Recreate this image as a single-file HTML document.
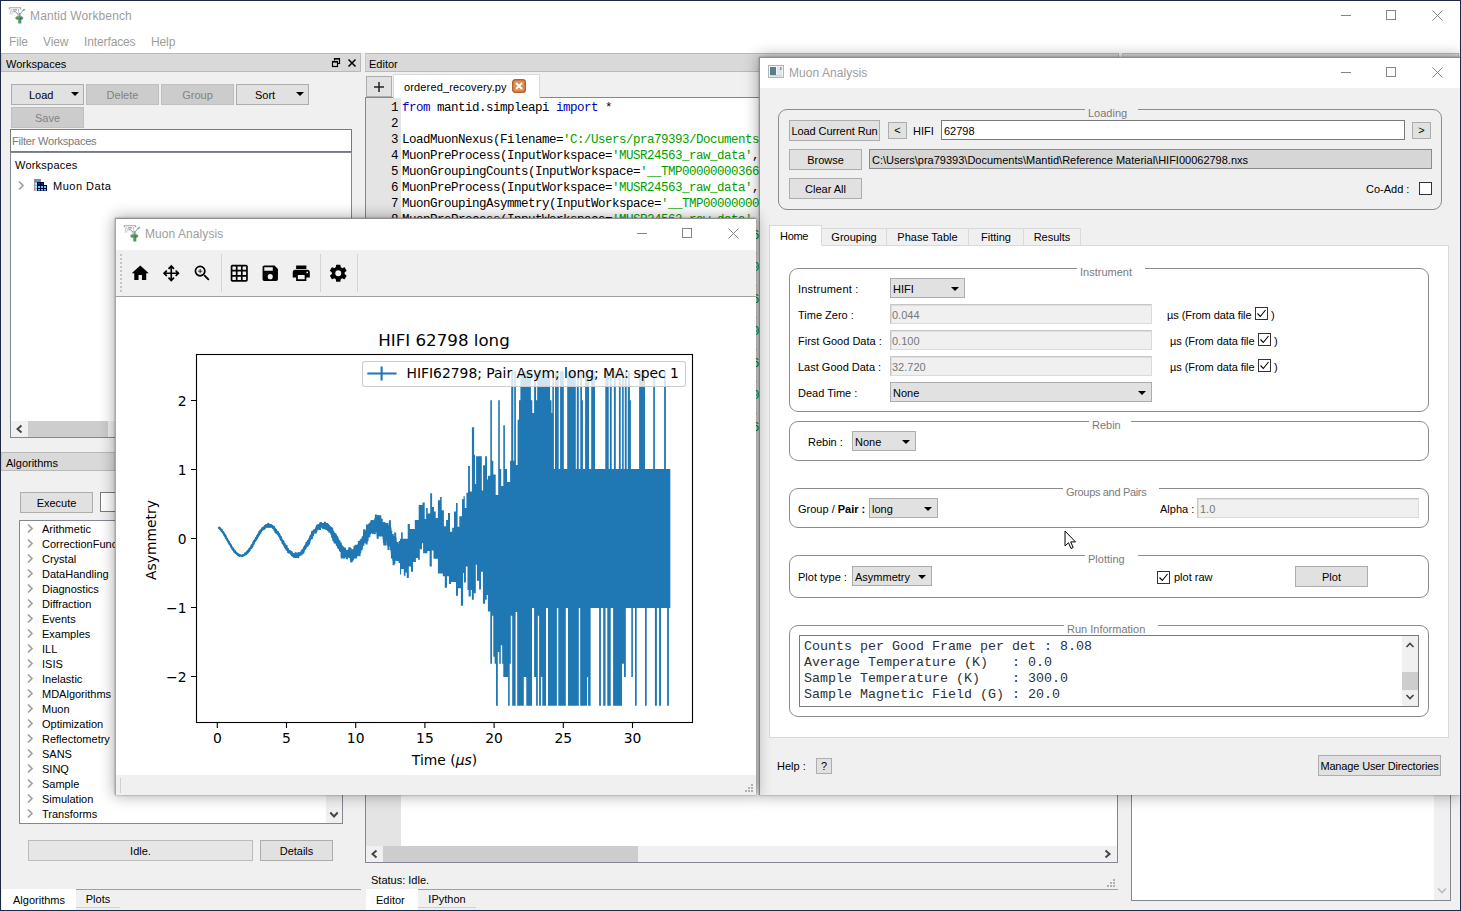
<!DOCTYPE html>
<html lang="en">
<head>
<meta charset="utf-8">
<title>Mantid Workbench</title>
<style>
*{box-sizing:border-box;margin:0;padding:0}
html,body{width:1461px;height:911px;overflow:hidden;background:#f0f0f0}
body{font-family:"Liberation Sans",sans-serif;font-size:11px;color:#000;position:relative}
.a{position:absolute;white-space:nowrap}
.t{position:absolute;white-space:nowrap;line-height:14px;height:14px}
.seg{font-size:12px;color:#9d9d9d;line-height:16px;height:16px}
.btn{position:absolute;background:#e1e1e1;border:1px solid #adadad;text-align:center;white-space:nowrap;line-height:20px}
.btn.dis{background:#cccccc;border-color:#bfbfbf;color:#838383}
.dock{position:absolute;height:19px;background:#d9d9d9;border:1px solid #b9b9b9;border-left-color:#c8c8c8;line-height:20px;padding-left:3px;white-space:nowrap}
.white{background:#fff}
.mono{font-family:"Liberation Mono",monospace}
.dj{font-family:"DejaVu Sans","Liberation Sans",sans-serif}
.win{position:absolute;background:#f0f0f0;box-shadow:0 0 14px 1px rgba(0,0,0,.32),0 0 2px rgba(0,0,0,.35)}
.gb{position:absolute;border:1px solid #8c8c8c;border-radius:9px}
.gbl{position:absolute;background:#f0f0f0;color:#7b7b7b;text-align:center;line-height:14px;height:14px;white-space:nowrap}
.gbl.w{background:#fff}
.inp{position:absolute;border:1px solid #7a7a7a;background:#fff;line-height:18px;padding-left:3px;white-space:nowrap}
.inp.dis{background:#f0f0f0;border:1px solid #c6c6c6;border-right-color:#dadada;border-bottom-color:#dadada;box-shadow:inset 1px 1px 0 #dedede;color:#787878}
.cmb{position:absolute;background:#e1e1e1;border:1px solid #adadad;line-height:18px;padding-left:3px;white-space:nowrap}
.cmb:after{content:"";position:absolute;right:5px;top:8px;border:4px solid transparent;border-top:4px solid #000;border-bottom:0}
.chk{position:absolute;width:13px;height:13px;border:1px solid #333;background:#fff}
.tab{position:absolute;border:1px solid #d9d9d9;background:#f0f0f0;text-align:center;line-height:19px;white-space:nowrap}
.tab.sel{background:#fff;border-bottom-color:#fff}
</style>
</head>
<body>
<!-- ============ MAIN WINDOW CHROME ============ -->
<div class="a white" style="left:0;top:0;width:1461px;height:53px"></div>
<div class="t seg" style="left:30px;top:8px;letter-spacing:.13px">Mantid Workbench</div>
<div class="t seg" style="left:9px;top:34px;letter-spacing:-.12px">File</div>
<div class="t seg" style="left:43px;top:34px;letter-spacing:-.12px">View</div>
<div class="t seg" style="left:84px;top:34px;letter-spacing:-.12px">Interfaces</div>
<div class="t seg" style="left:151px;top:34px;letter-spacing:-.12px">Help</div>
<svg class="a" style="left:7px;top:5px" width="20" height="20" viewBox="0 0 20 20"><g fill="none" stroke-linecap="round"><path d="M2.300 2.700h11.400M2.300 2.700v1.300M13.600 2.700v1.300" stroke="#a4a4a4" stroke-width="1.100"/><path d="M6.300 4.900h3.300" stroke="#9a9a9a" stroke-width="1.100"/><path d="M4.200 4.600v.800M11.400 4.600v.800" stroke="#aaa" stroke-width="1"/><path d="M3.500 6.200l-.3 3.100M5.300 6.200l-.5 3.100" stroke="#c9c9c9" stroke-width="1"/><path d="M6.800 6.700h1.800l2.200 2.400.5 1.600" stroke="#8d8d8d" stroke-width="1"/><path d="M11.700 6.200v4.800" stroke="#c4c4c4" stroke-width="1"/><path d="M12.900 8.500v3" stroke="#4d7c6f" stroke-width="1.200"/><path d="M13.600 8.600l1.500-2.300 1.200-.9" stroke="#8aa0ad" stroke-width="1"/><path d="M16.300 5.300l1-.5" stroke="#55995c" stroke-width="1.300"/></g><rect x="8.300" y="11.500" width="8" height="3" rx="1.500" fill="#7d8a80"/><rect x="9.600" y="11.500" width="5.400" height="3" fill="#4f9a57"/><rect x="11.300" y="13" width="3" height="5.500" fill="#4f9a57"/><rect x="13" y="13.100" width="1.200" height="1.200" fill="#1e5c6a"/></svg>
<svg class="a" style="left:1336px;top:5px" width="112" height="20" viewBox="0 0 112 20"><g fill="none" stroke="#858585" stroke-width="1"><path d="M5 10.5h10"/><rect x="50.500" y="5.500" width="9" height="9"/><path d="M96.500 5.500l10 10M106.500 5.500l-10 10"/></g></svg>

<!-- ============ WORKSPACES DOCK ============ -->
<!--LEFT-->
<div class="dock" style="left:1px;top:53px;width:360px;padding-left:4px">Workspaces</div>
<svg class="a" style="left:331px;top:57px" width="27" height="11" viewBox="0 0 27 11"><g fill="none" stroke="#000"><path d="M3.500 3.500v-2h5v5h-2" stroke-width="1.200"/><path d="M3 1.800h6" stroke-width="1.600"/><rect x="1.500" y="4.500" width="5" height="5" stroke-width="1.200"/><path d="M1 4.800h6" stroke-width="1.600"/><path d="M17.500 2.500l7 7M24.500 2.500l-7 7" stroke-width="1.500"/></g></svg>
<div class="btn" style="left:11px;top:84px;width:73px;height:21px;text-align:left;padding-left:17px">Load</div>
<div class="a" style="left:71px;top:92px;border:4px solid transparent;border-top:4px solid #000;border-bottom:0"></div>
<div class="btn dis" style="left:86px;top:84px;width:73px;height:21px">Delete</div>
<div class="btn dis" style="left:161px;top:84px;width:73px;height:21px">Group</div>
<div class="btn" style="left:236px;top:84px;width:73px;height:21px;text-align:left;padding-left:18px">Sort</div>
<div class="a" style="left:296px;top:92px;border:4px solid transparent;border-top:4px solid #000;border-bottom:0"></div>
<div class="btn dis" style="left:11px;top:107px;width:73px;height:21px">Save</div>
<div class="inp" style="left:10px;top:129px;width:342px;height:23px;line-height:23px;padding-left:1px;letter-spacing:-.2px;color:#7a7a7a">Filter Workspaces</div>
<div class="a white" style="left:10px;top:152px;width:342px;height:286px;border:1px solid #828790"></div>
<div class="t" style="left:15px;top:158px;letter-spacing:.22px">Workspaces</div>
<svg class="a" style="left:17px;top:180px" width="8" height="11" viewBox="0 0 8 11"><path d="M2 1.500l4 4-4 4" fill="none" stroke="#a0a0a0" stroke-width="1.700"/></svg>
<svg class="a" style="left:34px;top:179px" width="14" height="13" viewBox="0 0 14 13"><rect x="0" y="0" width="7" height="3" fill="#8c8c8c"/><rect x="1" y="1" width="2" height="1.300" fill="#4a90d9"/><rect x="4" y="1" width="2" height="1.300" fill="#4a90d9"/><rect x="0" y="3" width="3" height="9" fill="#9a9a9a"/><g fill="#a8ecff"><rect x="1" y="4" width="2" height="2"/><rect x="1" y="7" width="2" height="2"/><rect x="1" y="10" width="2" height="1.500"/></g><rect x="3" y="3" width="7" height="3" fill="#00003a"/><rect x="4" y="4" width="2" height="1.500" fill="#1c2ea8"/><rect x="7" y="4" width="2" height="1.500" fill="#1c2ea8"/><rect x="3" y="6" width="10" height="6" fill="#00003a"/><g fill="#4fd8ff"><rect x="4" y="7" width="2" height="2"/><rect x="7" y="7" width="2" height="2"/><rect x="10" y="7" width="2" height="2"/><rect x="4" y="10" width="2" height="1.500"/><rect x="7" y="10" width="2" height="1.500"/><rect x="10" y="10" width="2" height="1.500"/></g></svg>
<div class="t" style="left:53px;top:179px;letter-spacing:.5px">Muon Data</div>
<div class="a" style="left:11px;top:421px;width:340px;height:16px;background:#f0f0f0"></div>
<div class="a" style="left:28px;top:421px;width:80px;height:16px;background:#cdcdcd"></div>
<svg class="a" style="left:15px;top:424px" width="8" height="10" viewBox="0 0 8 10"><path d="M6.500 1.500l-4 3.500 4 3.500" fill="none" stroke="#444" stroke-width="1.900"/></svg>

<!-- Algorithms dock -->
<div class="dock" style="left:1px;top:452px;width:360px;padding-left:4px">Algorithms</div>
<div class="btn" style="left:20px;top:492px;width:73px;height:21px">Execute</div>
<div class="inp" style="left:100px;top:492px;width:243px;height:20px"></div>
<div class="a white" style="left:19px;top:520px;width:324px;height:304px;border:1px solid #828790"></div>
<div class="a" style="left:326px;top:521px;width:16px;height:302px;background:#f0f0f0"></div>
<svg class="a" style="left:329px;top:811px" width="10" height="8" viewBox="0 0 10 8"><path d="M1.300 1.500l3.700 4 3.700-4" fill="none" stroke="#444" stroke-width="2"/></svg>
<svg class="a" style="left:26px;top:523px" width="8" height="11" viewBox="0 0 8 11"><path d="M2 1.500l4 4-4 4" fill="none" stroke="#a0a0a0" stroke-width="1.700"/></svg><div class="t" style="left:42px;top:522px">Arithmetic</div>
<svg class="a" style="left:26px;top:538px" width="8" height="11" viewBox="0 0 8 11"><path d="M2 1.500l4 4-4 4" fill="none" stroke="#a0a0a0" stroke-width="1.700"/></svg><div class="t" style="left:42px;top:537px">CorrectionFunctions</div>
<svg class="a" style="left:26px;top:553px" width="8" height="11" viewBox="0 0 8 11"><path d="M2 1.500l4 4-4 4" fill="none" stroke="#a0a0a0" stroke-width="1.700"/></svg><div class="t" style="left:42px;top:552px">Crystal</div>
<svg class="a" style="left:26px;top:568px" width="8" height="11" viewBox="0 0 8 11"><path d="M2 1.500l4 4-4 4" fill="none" stroke="#a0a0a0" stroke-width="1.700"/></svg><div class="t" style="left:42px;top:567px">DataHandling</div>
<svg class="a" style="left:26px;top:583px" width="8" height="11" viewBox="0 0 8 11"><path d="M2 1.500l4 4-4 4" fill="none" stroke="#a0a0a0" stroke-width="1.700"/></svg><div class="t" style="left:42px;top:582px">Diagnostics</div>
<svg class="a" style="left:26px;top:598px" width="8" height="11" viewBox="0 0 8 11"><path d="M2 1.500l4 4-4 4" fill="none" stroke="#a0a0a0" stroke-width="1.700"/></svg><div class="t" style="left:42px;top:597px">Diffraction</div>
<svg class="a" style="left:26px;top:613px" width="8" height="11" viewBox="0 0 8 11"><path d="M2 1.500l4 4-4 4" fill="none" stroke="#a0a0a0" stroke-width="1.700"/></svg><div class="t" style="left:42px;top:612px">Events</div>
<svg class="a" style="left:26px;top:628px" width="8" height="11" viewBox="0 0 8 11"><path d="M2 1.500l4 4-4 4" fill="none" stroke="#a0a0a0" stroke-width="1.700"/></svg><div class="t" style="left:42px;top:627px">Examples</div>
<svg class="a" style="left:26px;top:643px" width="8" height="11" viewBox="0 0 8 11"><path d="M2 1.500l4 4-4 4" fill="none" stroke="#a0a0a0" stroke-width="1.700"/></svg><div class="t" style="left:42px;top:642px">ILL</div>
<svg class="a" style="left:26px;top:658px" width="8" height="11" viewBox="0 0 8 11"><path d="M2 1.500l4 4-4 4" fill="none" stroke="#a0a0a0" stroke-width="1.700"/></svg><div class="t" style="left:42px;top:657px">ISIS</div>
<svg class="a" style="left:26px;top:673px" width="8" height="11" viewBox="0 0 8 11"><path d="M2 1.500l4 4-4 4" fill="none" stroke="#a0a0a0" stroke-width="1.700"/></svg><div class="t" style="left:42px;top:672px">Inelastic</div>
<svg class="a" style="left:26px;top:688px" width="8" height="11" viewBox="0 0 8 11"><path d="M2 1.500l4 4-4 4" fill="none" stroke="#a0a0a0" stroke-width="1.700"/></svg><div class="t" style="left:42px;top:687px">MDAlgorithms</div>
<svg class="a" style="left:26px;top:703px" width="8" height="11" viewBox="0 0 8 11"><path d="M2 1.500l4 4-4 4" fill="none" stroke="#a0a0a0" stroke-width="1.700"/></svg><div class="t" style="left:42px;top:702px">Muon</div>
<svg class="a" style="left:26px;top:718px" width="8" height="11" viewBox="0 0 8 11"><path d="M2 1.500l4 4-4 4" fill="none" stroke="#a0a0a0" stroke-width="1.700"/></svg><div class="t" style="left:42px;top:717px">Optimization</div>
<svg class="a" style="left:26px;top:733px" width="8" height="11" viewBox="0 0 8 11"><path d="M2 1.500l4 4-4 4" fill="none" stroke="#a0a0a0" stroke-width="1.700"/></svg><div class="t" style="left:42px;top:732px">Reflectometry</div>
<svg class="a" style="left:26px;top:748px" width="8" height="11" viewBox="0 0 8 11"><path d="M2 1.500l4 4-4 4" fill="none" stroke="#a0a0a0" stroke-width="1.700"/></svg><div class="t" style="left:42px;top:747px">SANS</div>
<svg class="a" style="left:26px;top:763px" width="8" height="11" viewBox="0 0 8 11"><path d="M2 1.500l4 4-4 4" fill="none" stroke="#a0a0a0" stroke-width="1.700"/></svg><div class="t" style="left:42px;top:762px">SINQ</div>
<svg class="a" style="left:26px;top:778px" width="8" height="11" viewBox="0 0 8 11"><path d="M2 1.500l4 4-4 4" fill="none" stroke="#a0a0a0" stroke-width="1.700"/></svg><div class="t" style="left:42px;top:777px">Sample</div>
<svg class="a" style="left:26px;top:793px" width="8" height="11" viewBox="0 0 8 11"><path d="M2 1.500l4 4-4 4" fill="none" stroke="#a0a0a0" stroke-width="1.700"/></svg><div class="t" style="left:42px;top:792px">Simulation</div>
<svg class="a" style="left:26px;top:808px" width="8" height="11" viewBox="0 0 8 11"><path d="M2 1.500l4 4-4 4" fill="none" stroke="#a0a0a0" stroke-width="1.700"/></svg><div class="t" style="left:42px;top:807px">Transforms</div>
<div class="a" style="left:28px;top:840px;width:225px;height:21px;background:#e6e6e6;border:1px solid #bcbcbc;text-align:center;line-height:20px">Idle.</div>
<div class="btn" style="left:260px;top:840px;width:73px;height:21px;line-height:20px">Details</div>
<div class="a" style="left:2px;top:889px;width:359px;height:1px;background:#a0a0a0"></div>
<div class="a white" style="left:2px;top:889px;width:74px;height:21px;text-align:center;line-height:22px">Algorithms</div>
<div class="a" style="left:76px;top:890px;width:44px;height:18px;border-bottom:1px solid #d0d0d0;text-align:center;line-height:19px">Plots</div>
<!--/LEFT-->

<!-- ============ EDITOR DOCK ============ -->
<!--EDITOR-->
<div class="dock" style="left:365px;top:53px;width:754px">Editor</div>
<div class="btn" style="left:366px;top:76px;width:26px;height:21px"></div>
<svg class="a" style="left:373px;top:81px" width="12" height="12" viewBox="0 0 12 12"><path d="M6 1v10M1 6h10" stroke="#222" stroke-width="1.500" fill="none"/></svg>
<div class="a white" style="left:365px;top:97px;width:753px;height:766px;border:1px solid #828790"></div>
<div class="a white" style="left:393px;top:74px;width:147px;height:24px;border:1px solid #d9d9d9;border-bottom:0"></div>
<div class="t" style="left:404px;top:80px;letter-spacing:.14px">ordered_recovery.py</div>
<svg class="a" style="left:512px;top:79px" width="14" height="14" viewBox="0 0 14 14"><rect x="0.700" y="0.700" width="12.600" height="12.600" rx="2.500" fill="#dc8f55" stroke="#b7622b" stroke-width="1.400"/><path d="M4 4l6 6M10 4l-6 6" stroke="#fff" stroke-width="2" fill="none"/></svg>
<div class="a" style="left:366px;top:98px;width:35px;height:748px;background:#e4e4e4"></div>
<div class="t mono" style="left:366px;top:100px;width:32px;text-align:right;font-size:12.5px;letter-spacing:-.5px;line-height:16px;height:16px">1</div>
<div class="t mono" style="left:402px;top:100px;width:714px;overflow:hidden;font-size:12.5px;letter-spacing:-.5px;line-height:16px;height:16px"><span style="color:#0000b4">from</span> mantid.simpleapi <span style="color:#0000b4">import</span> *</div>
<div class="t mono" style="left:366px;top:116px;width:32px;text-align:right;font-size:12.5px;letter-spacing:-.5px;line-height:16px;height:16px">2</div>
<div class="t mono" style="left:366px;top:132px;width:32px;text-align:right;font-size:12.5px;letter-spacing:-.5px;line-height:16px;height:16px">3</div>
<div class="t mono" style="left:402px;top:132px;width:714px;overflow:hidden;font-size:12.5px;letter-spacing:-.5px;line-height:16px;height:16px">LoadMuonNexus(Filename=<span style="color:#00a000">'C:/Users/pra79393/Documents/Mantid/Reference Material/MUSR00024563.nxs'</span>, OutputWorkspace=<span style="color:#00a000">'MUSR24563_raw_data'</span>)</div>
<div class="t mono" style="left:366px;top:148px;width:32px;text-align:right;font-size:12.5px;letter-spacing:-.5px;line-height:16px;height:16px">4</div>
<div class="t mono" style="left:402px;top:148px;width:714px;overflow:hidden;font-size:12.5px;letter-spacing:-.5px;line-height:16px;height:16px">MuonPreProcess(InputWorkspace=<span style="color:#00a000">'MUSR24563_raw_data'</span>, OutputWorkspace=<span style="color:#00a000">'__TMP0000000036600'</span>, TimeMin=0.1, TimeMax=32.0)</div>
<div class="t mono" style="left:366px;top:164px;width:32px;text-align:right;font-size:12.5px;letter-spacing:-.5px;line-height:16px;height:16px">5</div>
<div class="t mono" style="left:402px;top:164px;width:714px;overflow:hidden;font-size:12.5px;letter-spacing:-.5px;line-height:16px;height:16px">MuonGroupingCounts(InputWorkspace=<span style="color:#00a000">'__TMP0000000036600'</span>, OutputWorkspace=<span style="color:#00a000">'MUSR24563; Group; fwd; Counts'</span>, GroupName=<span style="color:#00a000">'fwd'</span>)</div>
<div class="t mono" style="left:366px;top:180px;width:32px;text-align:right;font-size:12.5px;letter-spacing:-.5px;line-height:16px;height:16px">6</div>
<div class="t mono" style="left:402px;top:180px;width:714px;overflow:hidden;font-size:12.5px;letter-spacing:-.5px;line-height:16px;height:16px">MuonPreProcess(InputWorkspace=<span style="color:#00a000">'MUSR24563_raw_data'</span>, OutputWorkspace=<span style="color:#00a000">'__TMP0000000036601'</span>, TimeMin=0.1, TimeMax=32.0)</div>
<div class="t mono" style="left:366px;top:196px;width:32px;text-align:right;font-size:12.5px;letter-spacing:-.5px;line-height:16px;height:16px">7</div>
<div class="t mono" style="left:402px;top:196px;width:714px;overflow:hidden;font-size:12.5px;letter-spacing:-.5px;line-height:16px;height:16px">MuonGroupingAsymmetry(InputWorkspace=<span style="color:#00a000">'__TMP0000000036601'</span>, OutputWorkspace=<span style="color:#00a000">'MUSR24563; Group; fwd; Asym'</span>, GroupName=<span style="color:#00a000">'fwd'</span>)</div>
<div class="t mono" style="left:366px;top:212px;width:32px;text-align:right;font-size:12.5px;letter-spacing:-.5px;line-height:16px;height:16px">8</div>
<div class="t mono" style="left:402px;top:212px;width:714px;overflow:hidden;font-size:12.5px;letter-spacing:-.5px;line-height:16px;height:16px">MuonPreProcess(InputWorkspace=<span style="color:#00a000">'MUSR24563_raw_data'</span>, OutputWorkspace=<span style="color:#00a000">'__TMP0000000036600'</span>, TimeMin=0.1, TimeMax=32.0)</div>
<div class="t mono" style="left:366px;top:228px;width:32px;text-align:right;font-size:12.5px;letter-spacing:-.5px;line-height:16px;height:16px">9</div>
<div class="t mono" style="left:402px;top:228px;width:714px;overflow:hidden;font-size:12.5px;letter-spacing:-.5px;line-height:16px;height:16px">MuonGroupingCounts(InputWorkspace=<span style="color:#00a000">'__TMP0000000036600'</span>, OutputWorkspace=<span style="color:#00a000">'MUSR24563; Group; fwd; Counts'</span>, GroupName=<span style="color:#00a000">'fwd'</span>)</div>
<div class="t mono" style="left:366px;top:244px;width:32px;text-align:right;font-size:12.5px;letter-spacing:-.5px;line-height:16px;height:16px">10</div>
<div class="t mono" style="left:402px;top:244px;width:714px;overflow:hidden;font-size:12.5px;letter-spacing:-.5px;line-height:16px;height:16px">MuonPreProcess(InputWorkspace=<span style="color:#00a000">'MUSR24563_raw_data'</span>, OutputWorkspace=<span style="color:#00a000">'__TMP0000000036600'</span>, TimeMin=0.1, TimeMax=32.0)</div>
<div class="t mono" style="left:366px;top:260px;width:32px;text-align:right;font-size:12.5px;letter-spacing:-.5px;line-height:16px;height:16px">11</div>
<div class="t mono" style="left:402px;top:260px;width:714px;overflow:hidden;font-size:12.5px;letter-spacing:-.5px;line-height:16px;height:16px">MuonGroupingAsymmetry(InputWorkspace=<span style="color:#00a000">'__TMP0000000036601'</span>, OutputWorkspace=<span style="color:#00a000">'MUSR24563; Group; fwd; Asym'</span>, GroupName=<span style="color:#00a000">'fwd'</span>)</div>
<div class="t mono" style="left:366px;top:276px;width:32px;text-align:right;font-size:12.5px;letter-spacing:-.5px;line-height:16px;height:16px">12</div>
<div class="t mono" style="left:402px;top:276px;width:714px;overflow:hidden;font-size:12.5px;letter-spacing:-.5px;line-height:16px;height:16px">MuonPreProcess(InputWorkspace=<span style="color:#00a000">'MUSR24563_raw_data'</span>, OutputWorkspace=<span style="color:#00a000">'__TMP0000000036600'</span>, TimeMin=0.1, TimeMax=32.0)</div>
<div class="t mono" style="left:366px;top:292px;width:32px;text-align:right;font-size:12.5px;letter-spacing:-.5px;line-height:16px;height:16px">13</div>
<div class="t mono" style="left:402px;top:292px;width:714px;overflow:hidden;font-size:12.5px;letter-spacing:-.5px;line-height:16px;height:16px">MuonGroupingCounts(InputWorkspace=<span style="color:#00a000">'__TMP0000000036600'</span>, OutputWorkspace=<span style="color:#00a000">'MUSR24563; Group; fwd; Counts'</span>, GroupName=<span style="color:#00a000">'fwd'</span>)</div>
<div class="t mono" style="left:366px;top:308px;width:32px;text-align:right;font-size:12.5px;letter-spacing:-.5px;line-height:16px;height:16px">14</div>
<div class="t mono" style="left:402px;top:308px;width:714px;overflow:hidden;font-size:12.5px;letter-spacing:-.5px;line-height:16px;height:16px">MuonPreProcess(InputWorkspace=<span style="color:#00a000">'MUSR24563_raw_data'</span>, OutputWorkspace=<span style="color:#00a000">'__TMP0000000036600'</span>, TimeMin=0.1, TimeMax=32.0)</div>
<div class="t mono" style="left:366px;top:324px;width:32px;text-align:right;font-size:12.5px;letter-spacing:-.5px;line-height:16px;height:16px">15</div>
<div class="t mono" style="left:402px;top:324px;width:714px;overflow:hidden;font-size:12.5px;letter-spacing:-.5px;line-height:16px;height:16px">MuonGroupingAsymmetry(InputWorkspace=<span style="color:#00a000">'__TMP0000000036601'</span>, OutputWorkspace=<span style="color:#00a000">'MUSR24563; Group; fwd; Asym'</span>, GroupName=<span style="color:#00a000">'fwd'</span>)</div>
<div class="t mono" style="left:366px;top:340px;width:32px;text-align:right;font-size:12.5px;letter-spacing:-.5px;line-height:16px;height:16px">16</div>
<div class="t mono" style="left:402px;top:340px;width:714px;overflow:hidden;font-size:12.5px;letter-spacing:-.5px;line-height:16px;height:16px">MuonPreProcess(InputWorkspace=<span style="color:#00a000">'MUSR24563_raw_data'</span>, OutputWorkspace=<span style="color:#00a000">'__TMP0000000036600'</span>, TimeMin=0.1, TimeMax=32.0)</div>
<div class="t mono" style="left:366px;top:356px;width:32px;text-align:right;font-size:12.5px;letter-spacing:-.5px;line-height:16px;height:16px">17</div>
<div class="t mono" style="left:402px;top:356px;width:714px;overflow:hidden;font-size:12.5px;letter-spacing:-.5px;line-height:16px;height:16px">MuonGroupingCounts(InputWorkspace=<span style="color:#00a000">'__TMP0000000036600'</span>, OutputWorkspace=<span style="color:#00a000">'MUSR24563; Group; fwd; Counts'</span>, GroupName=<span style="color:#00a000">'fwd'</span>)</div>
<div class="t mono" style="left:366px;top:372px;width:32px;text-align:right;font-size:12.5px;letter-spacing:-.5px;line-height:16px;height:16px">18</div>
<div class="t mono" style="left:402px;top:372px;width:714px;overflow:hidden;font-size:12.5px;letter-spacing:-.5px;line-height:16px;height:16px">MuonPreProcess(InputWorkspace=<span style="color:#00a000">'MUSR24563_raw_data'</span>, OutputWorkspace=<span style="color:#00a000">'__TMP0000000036600'</span>, TimeMin=0.1, TimeMax=32.0)</div>
<div class="t mono" style="left:366px;top:388px;width:32px;text-align:right;font-size:12.5px;letter-spacing:-.5px;line-height:16px;height:16px">19</div>
<div class="t mono" style="left:402px;top:388px;width:714px;overflow:hidden;font-size:12.5px;letter-spacing:-.5px;line-height:16px;height:16px">MuonGroupingAsymmetry(InputWorkspace=<span style="color:#00a000">'__TMP0000000036601'</span>, OutputWorkspace=<span style="color:#00a000">'MUSR24563; Group; fwd; Asym'</span>, GroupName=<span style="color:#00a000">'fwd'</span>)</div>
<div class="t mono" style="left:366px;top:404px;width:32px;text-align:right;font-size:12.5px;letter-spacing:-.5px;line-height:16px;height:16px">20</div>
<div class="t mono" style="left:402px;top:404px;width:714px;overflow:hidden;font-size:12.5px;letter-spacing:-.5px;line-height:16px;height:16px">MuonPreProcess(InputWorkspace=<span style="color:#00a000">'MUSR24563_raw_data'</span>, OutputWorkspace=<span style="color:#00a000">'__TMP0000000036600'</span>, TimeMin=0.1, TimeMax=32.0)</div>
<div class="t mono" style="left:366px;top:420px;width:32px;text-align:right;font-size:12.5px;letter-spacing:-.5px;line-height:16px;height:16px">21</div>
<div class="t mono" style="left:402px;top:420px;width:714px;overflow:hidden;font-size:12.5px;letter-spacing:-.5px;line-height:16px;height:16px">MuonGroupingCounts(InputWorkspace=<span style="color:#00a000">'__TMP0000000036600'</span>, OutputWorkspace=<span style="color:#00a000">'MUSR24563; Group; fwd; Counts'</span>, GroupName=<span style="color:#00a000">'fwd'</span>)</div>
<div class="a" style="left:366px;top:846px;width:751px;height:16px;background:#f0f0f0"></div>
<div class="a" style="left:383px;top:846px;width:255px;height:16px;background:#cdcdcd"></div>
<svg class="a" style="left:370px;top:849px" width="8" height="10" viewBox="0 0 8 10"><path d="M6.500 1.500l-4 3.500 4 3.500" fill="none" stroke="#444" stroke-width="2"/></svg>
<svg class="a" style="left:1104px;top:849px" width="8" height="10" viewBox="0 0 8 10"><path d="M1.500 1.500l4 3.500-4 3.500" fill="none" stroke="#444" stroke-width="2"/></svg>
<div class="t" style="left:371px;top:873px">Status: Idle.</div>
<div class="a" style="left:366px;top:889px;width:752px;height:1px;background:#a0a0a0"></div>
<svg class="a" style="left:1106px;top:878px" width="10" height="10" viewBox="0 0 10 10"><g fill="#b0b0b0"><rect x="7" y="1" width="2" height="2"/><rect x="4" y="4" width="2" height="2"/><rect x="7" y="4" width="2" height="2"/><rect x="1" y="7" width="2" height="2"/><rect x="4" y="7" width="2" height="2"/><rect x="7" y="7" width="2" height="2"/></g></svg>
<div class="a white" style="left:366px;top:889px;width:52px;height:21px;padding-left:10px;line-height:22px">Editor</div>
<div class="a" style="left:418px;top:890px;width:58px;height:18px;border-bottom:1px solid #d0d0d0;text-align:center;line-height:19px">IPython</div>
<!--/EDITOR-->

<!-- ============ RIGHT DOCK ============ -->
<!--RIGHT-->
<div class="dock" style="left:1122px;top:53px;width:337px"></div>
<div class="a white" style="left:1131px;top:80px;width:320px;height:821px;border:1px solid #828790"></div>
<div class="a" style="left:1434px;top:81px;width:16px;height:819px;background:#f0f0f0"></div>
<svg class="a" style="left:1437px;top:887px" width="10" height="8" viewBox="0 0 10 8"><path d="M1 1.500l4 4 4-4" fill="none" stroke="#bbb" stroke-width="1.600"/></svg>
<!--/RIGHT-->

<!-- ============ MUON ANALYSIS WINDOW ============ -->
<!--MUONWIN-->
<div class="win" style="left:759px;top:57px;width:701px;height:738px;border:1px solid #8f8f8f;border-right:0;border-bottom:0"></div>
<div class="a white" style="left:760px;top:58px;width:700px;height:30px"></div>
<svg class="a" style="left:768px;top:65px" width="16" height="13" viewBox="0 0 16 13"><rect x=".5" y=".5" width="15" height="12" fill="#f4f4f4" stroke="#b5b5b5"/><rect x="2" y="2" width="6" height="8" fill="#55808a"/><rect x="9" y="2" width="5" height="8" fill="#e3e6ea"/><rect x="12" y="2" width="1.500" height="3" fill="#6f9ecb"/><rect x="2" y="10" width="12" height="1.500" fill="#d2d2d2"/></svg>
<div class="t seg" style="left:789px;top:65px;letter-spacing:.07px">Muon Analysis</div>
<svg class="a" style="left:1336px;top:62px" width="112" height="20" viewBox="0 0 112 20"><g fill="none" stroke="#858585" stroke-width="1"><path d="M5 10.500h10"/><rect x="50.500" y="5.500" width="9" height="9"/><path d="M96.500 5.500l10 10M106.500 5.500l-10 10"/></g></svg>
<div class="gb" style="left:778px;top:109px;width:664px;height:101px"></div>
<div class="gbl" style="left:1085px;top:106px;width:53px;text-align:left;padding-left:3px"><span>Loading</span></div>
<div class="btn" style="left:789px;top:120px;width:91px;height:21px;letter-spacing:-.08px">Load Current Run</div>
<div class="btn" style="left:888px;top:122px;width:19px;height:17px;line-height:15px">&lt;</div>
<div class="t" style="left:913px;top:124px">HIFI</div>
<div class="inp" style="left:941px;top:120px;width:464px;height:20px;line-height:20px;padding-left:2px">62798</div>
<div class="btn" style="left:1412px;top:122px;width:19px;height:17px;line-height:15px">&gt;</div>
<div class="btn" style="left:789px;top:149px;width:73px;height:21px">Browse</div>
<div class="a" style="left:869px;top:149px;width:563px;height:20px;background:#d6d6d6;border:1px solid #8a8a8a;line-height:20px;padding-left:2px">C:\Users\pra79393\Documents\Mantid\Reference Material\HIFI00062798.nxs</div>
<div class="btn" style="left:789px;top:178px;width:73px;height:21px">Clear All</div>
<div class="t" style="left:1366px;top:182px">Co-Add :</div>
<div class="chk" style="left:1419px;top:182px"></div>
<div class="a white" style="left:769px;top:245px;width:680px;height:493px;border:1px solid #d9d9d9"></div>
<div class="tab" style="left:821px;top:228px;width:66px;height:18px;line-height:17px">Grouping</div>
<div class="tab" style="left:886px;top:228px;width:83px;height:18px;line-height:17px">Phase Table</div>
<div class="tab" style="left:968px;top:228px;width:56px;height:18px;line-height:17px">Fitting</div>
<div class="tab" style="left:1023px;top:228px;width:58px;height:18px;line-height:17px">Results</div>
<div class="tab sel" style="left:769px;top:225px;width:53px;height:21px;line-height:20px;letter-spacing:-.3px;text-align:left;padding-left:10px">Home</div>
<div class="gb" style="left:789px;top:268px;width:640px;height:144px"></div>
<div class="gbl w" style="left:1077px;top:265px;width:68px;text-align:left;padding-left:3px"><span>Instrument</span></div>
<div class="t" style="left:798px;top:282px;letter-spacing:.2px">Instrument :</div>
<div class="cmb" style="left:890px;top:278px;width:75px;height:20px;line-height:20px;padding-left:2px">HIFI</div>
<div class="t" style="left:798px;top:308px">Time Zero :</div>
<div class="inp dis" style="left:890px;top:304px;width:262px;height:20px;line-height:20px;padding-left:1px">0.044</div>
<div class="t" style="left:1167px;top:308px;letter-spacing:-.07px">µs (From data file</div>
<div class="chk" style="left:1255px;top:307px"></div><svg class="a" style="left:1255px;top:307px" width="13" height="13" viewBox="0 0 13 13"><path d="M2.500 6.500l2.800 3 5.200-6.500" fill="none" stroke="#000" stroke-width="1.100"/></svg>
<div class="t" style="left:1271px;top:308px">)</div>
<div class="t" style="left:798px;top:334px">First Good Data :</div>
<div class="inp dis" style="left:890px;top:330px;width:262px;height:20px;line-height:20px;padding-left:1px">0.100</div>
<div class="t" style="left:1170px;top:334px;letter-spacing:-.07px">µs (From data file</div>
<div class="chk" style="left:1258px;top:333px"></div><svg class="a" style="left:1258px;top:333px" width="13" height="13" viewBox="0 0 13 13"><path d="M2.500 6.500l2.800 3 5.200-6.500" fill="none" stroke="#000" stroke-width="1.100"/></svg>
<div class="t" style="left:1274px;top:334px">)</div>
<div class="t" style="left:798px;top:360px">Last Good Data :</div>
<div class="inp dis" style="left:890px;top:356px;width:262px;height:20px;line-height:20px;padding-left:1px">32.720</div>
<div class="t" style="left:1170px;top:360px;letter-spacing:-.07px">µs (From data file</div>
<div class="chk" style="left:1258px;top:359px"></div><svg class="a" style="left:1258px;top:359px" width="13" height="13" viewBox="0 0 13 13"><path d="M2.500 6.500l2.800 3 5.200-6.500" fill="none" stroke="#000" stroke-width="1.100"/></svg>
<div class="t" style="left:1274px;top:360px">)</div>
<div class="t" style="left:798px;top:386px">Dead Time :</div>
<div class="cmb" style="left:890px;top:382px;width:262px;height:20px;line-height:21px;padding-left:2px">None</div>
<div class="gb" style="left:789px;top:421px;width:640px;height:40px"></div>
<div class="gbl w" style="left:1089px;top:418px;width:42px;text-align:left;padding-left:3px"><span>Rebin</span></div>
<div class="t" style="left:808px;top:435px">Rebin :</div>
<div class="cmb" style="left:852px;top:431px;width:64px;height:20px;line-height:21px;padding-left:2px">None</div>
<div class="gb" style="left:789px;top:488px;width:640px;height:40px"></div>
<div class="gbl w" style="left:1063px;top:485px;width:96px;text-align:left;padding-left:3px"><span style="letter-spacing:-.33px">Groups and Pairs</span></div>
<div class="t" style="left:798px;top:502px">Group / <b>Pair :</b></div>
<div class="cmb" style="left:869px;top:498px;width:69px;height:20px;line-height:21px;padding-left:2px">long</div>
<div class="t" style="left:1160px;top:502px">Alpha :</div>
<div class="inp dis" style="left:1197px;top:498px;width:222px;height:20px;line-height:20px;padding-left:2px">1.0</div>
<div class="gb" style="left:789px;top:555px;width:640px;height:43px"></div>
<div class="gbl w" style="left:1085px;top:552px;width:53px;text-align:left;padding-left:3px"><span>Plotting</span></div>
<div class="t" style="left:798px;top:570px">Plot type :</div>
<div class="cmb" style="left:852px;top:566px;width:80px;height:20px;line-height:21px;padding-left:2px">Asymmetry</div>
<div class="chk" style="left:1157px;top:571px"></div><svg class="a" style="left:1157px;top:571px" width="13" height="13" viewBox="0 0 13 13"><path d="M2.500 6.500l2.800 3 5.200-6.500" fill="none" stroke="#000" stroke-width="1.100"/></svg>
<div class="t" style="left:1174px;top:570px">plot raw</div>
<div class="btn" style="left:1295px;top:566px;width:73px;height:21px">Plot</div>
<div class="gb" style="left:789px;top:625px;width:640px;height:92px"></div>
<div class="gbl w" style="left:1064px;top:622px;width:94px;text-align:left;padding-left:3px"><span>Run Information</span></div>
<div class="a white" style="left:799px;top:635px;width:620px;height:72px;border:1px solid #7a7a7a"></div>
<div class="t mono" style="left:804px;top:639px;font-size:13.330px;line-height:16px;height:16px;white-space:pre;color:#303030">Counts per Good Frame per det : 8.08</div>
<div class="t mono" style="left:804px;top:655px;font-size:13.330px;line-height:16px;height:16px;white-space:pre;color:#303030">Average Temperature (K)   : 0.0</div>
<div class="t mono" style="left:804px;top:671px;font-size:13.330px;line-height:16px;height:16px;white-space:pre;color:#303030">Sample Temperature (K)    : 300.0</div>
<div class="t mono" style="left:804px;top:687px;font-size:13.330px;line-height:16px;height:16px;white-space:pre;color:#303030">Sample Magnetic Field (G) : 20.0</div>
<div class="a" style="left:1402px;top:636px;width:16px;height:70px;background:#f0f0f0"></div>
<div class="a" style="left:1402px;top:672px;width:16px;height:18px;background:#cdcdcd"></div>
<svg class="a" style="left:1405px;top:641px" width="10" height="8" viewBox="0 0 10 8"><path d="M1.500 6l3.500-3.500 3.500 3.500" fill="none" stroke="#444" stroke-width="1.600"/></svg>
<svg class="a" style="left:1405px;top:693px" width="10" height="8" viewBox="0 0 10 8"><path d="M1.500 2l3.500 3.500 3.500-3.500" fill="none" stroke="#444" stroke-width="1.600"/></svg>
<div class="t" style="left:777px;top:759px">Help :</div>
<div class="btn" style="left:816px;top:758px;width:16px;height:16px;line-height:14px">?</div>
<div class="btn" style="left:1318px;top:755px;width:123px;height:21px;letter-spacing:-.15px">Manage User Directories</div>
<svg class="a" style="left:1064px;top:530px" width="13" height="20" viewBox="0 0 13 20"><path d="M1 1v15l3.500-3.300 2.500 5.800 2.200-1-2.500-5.600h4.800z" fill="#fff" stroke="#000" stroke-width="1"/></svg>
<!--/MUONWIN-->

<!-- ============ PLOT WINDOW ============ -->
<!--PLOTWIN-->
<div class="win" style="left:115px;top:218px;width:641px;height:577px;border-top:1px solid #8f8f8f;border-left:1px solid #a8a8a8"></div>
<div class="a white" style="left:116px;top:219px;width:640px;height:31px"></div>
<svg class="a" style="left:122px;top:223px" width="20" height="20" viewBox="0 0 20 20"><g fill="none" stroke-linecap="round"><path d="M2.300 2.700h11.400M2.300 2.700v1.300M13.600 2.700v1.300" stroke="#a4a4a4" stroke-width="1.100"/><path d="M6.300 4.900h3.300" stroke="#9a9a9a" stroke-width="1.100"/><path d="M4.200 4.600v.800M11.400 4.600v.800" stroke="#aaa" stroke-width="1"/><path d="M3.500 6.200l-.3 3.100M5.300 6.200l-.5 3.100" stroke="#c9c9c9" stroke-width="1"/><path d="M6.800 6.700h1.800l2.200 2.400.5 1.600" stroke="#8d8d8d" stroke-width="1"/><path d="M11.700 6.200v4.800" stroke="#c4c4c4" stroke-width="1"/><path d="M12.900 8.500v3" stroke="#4d7c6f" stroke-width="1.200"/><path d="M13.600 8.600l1.500-2.300 1.200-.9" stroke="#8aa0ad" stroke-width="1"/><path d="M16.300 5.300l1-.5" stroke="#55995c" stroke-width="1.300"/></g><rect x="8.300" y="11.500" width="8" height="3" rx="1.500" fill="#7d8a80"/><rect x="9.600" y="11.500" width="5.400" height="3" fill="#4f9a57"/><rect x="11.300" y="13" width="3" height="5.500" fill="#4f9a57"/><rect x="13" y="13.100" width="1.200" height="1.200" fill="#1e5c6a"/></svg>
<div class="t seg" style="left:145px;top:226px;letter-spacing:.07px">Muon Analysis</div>
<svg class="a" style="left:632px;top:223px" width="112" height="20" viewBox="0 0 112 20"><g fill="none" stroke="#858585" stroke-width="1"><path d="M5 10.500h10"/><rect x="50.500" y="5.500" width="9" height="9"/><path d="M96.500 5.500l10 10M106.500 5.500l-10 10"/></g></svg>
<div class="a" style="left:116px;top:250px;width:640px;height:47px;background:#f0f0f0;border-bottom:1px solid #a0a0a0"></div>
<div class="a" style="left:120px;top:254px;width:2px;height:38px;border-left:2px dotted #c4c4c4"></div>
<svg class="a" style="left:130.3px;top:262.900px" width="20.500" height="20.500" viewBox="0 0 24 24"><path d="M10,20V14H14V20H19V12H22L12,3L2,12H5V20H10Z" fill="#000"/></svg>
<svg class="a" style="left:161.3px;top:262.900px" width="20.500" height="20.500" viewBox="0 0 24 24"><path d="M13,11H18L16.5,9.5L17.92,8.08L21.84,12L17.92,15.92L16.5,14.5L18,13H13V18L14.5,16.5L15.92,17.92L12,21.84L8.08,17.92L9.5,16.5L11,18V13H6L7.500,14.500L6.080,15.920L2.160,12L6.080,8.080L7.500,9.500L6,11H11V6L9.500,7.500L8.080,6.080L12,2.160L15.920,6.080L14.500,7.500L13,6V11Z" fill="#000"/></svg>
<svg class="a" style="left:191.8px;top:262.900px" width="20.500" height="20.500" viewBox="0 0 24 24"><path d="M15.500,14L20.500,19L19,20.500L14,15.500V14.710L13.730,14.430C12.590,15.410 11.110,16 9.500,16A6.500,6.500 0 0,1 3,9.500A6.500,6.500 0 0,1 9.500,3A6.500,6.500 0 0,1 16,9.500C16,11.110 15.410,12.590 14.430,13.730L14.710,14H15.500M9.500,14C12,14 14,12 14,9.500C14,7 12,5 9.500,5C7,5 5,7 5,9.500C5,12 7,14 9.500,14M12,10H10V12H9V10H7V9H9V7H10V9H12V10Z" fill="#000"/></svg>
<svg class="a" style="left:229.2px;top:262.900px" width="20.500" height="20.500" viewBox="0 0 24 24"><path d="M10,4V8H14V4H10M16,4V8H20V4H16M16,10V14H20V10H16M16,16V20H20V16H16M14,20V16H10V20H14M8,20V16H4V20H8M8,14V10H4V14H8M8,8V4H4V8H8M10,14H14V10H10V14M4,2H20A2,2 0 0,1 22,4V20A2,2 0 0,1 20,22H4C2.920,22 2,21.100 2,20V4A2,2 0 0,1 4,2Z" fill="#000"/></svg>
<svg class="a" style="left:259.8px;top:262.900px" width="20.500" height="20.500" viewBox="0 0 24 24"><path d="M15,9H5V5H15M12,19A3,3 0 0,1 9,16A3,3 0 0,1 12,13A3,3 0 0,1 15,16A3,3 0 0,1 12,19M17,3H5C3.890,3 3,3.900 3,5V19A2,2 0 0,0 5,21H19A2,2 0 0,0 21,19V7L17,3Z" fill="#000"/></svg>
<svg class="a" style="left:290.8px;top:262.900px" width="20.500" height="20.500" viewBox="0 0 24 24"><path d="M18,3H6V7H18M19,12A1,1 0 0,1 18,11A1,1 0 0,1 19,10A1,1 0 0,1 20,11A1,1 0 0,1 19,12M16,19H8V14H16M19,8H5A3,3 0 0,0 2,11V17H6V21H18V17H22V11A3,3 0 0,0 19,8Z" fill="#000"/></svg>
<svg class="a" style="left:327.6px;top:262.900px" width="20.500" height="20.500" viewBox="0 0 24 24"><path d="M12,15.500A3.500,3.500 0 0,1 8.500,12A3.500,3.500 0 0,1 12,8.500A3.500,3.500 0 0,1 15.500,12A3.500,3.500 0 0,1 12,15.500M19.430,12.970C19.470,12.650 19.500,12.330 19.500,12C19.500,11.670 19.470,11.340 19.430,11L21.540,9.370C21.730,9.220 21.780,8.950 21.660,8.730L19.660,5.270C19.540,5.050 19.270,4.960 19.050,5.050L16.560,6.050C16.040,5.660 15.500,5.320 14.870,5.070L14.500,2.420C14.460,2.180 14.250,2 14,2H10C9.750,2 9.540,2.180 9.500,2.420L9.130,5.070C8.500,5.320 7.960,5.660 7.440,6.050L4.950,5.050C4.730,4.960 4.460,5.050 4.340,5.270L2.340,8.730C2.210,8.950 2.270,9.220 2.460,9.370L4.570,11C4.530,11.340 4.500,11.670 4.500,12C4.500,12.330 4.530,12.650 4.570,12.970L2.460,14.630C2.270,14.780 2.210,15.050 2.340,15.270L4.340,18.730C4.460,18.950 4.730,19.030 4.950,18.950L7.440,17.940C7.960,18.340 8.500,18.680 9.130,18.930L9.500,21.580C9.540,21.820 9.750,22 10,22H14C14.250,22 14.460,21.820 14.500,21.580L14.870,18.930C15.500,18.670 16.040,18.340 16.560,17.940L19.050,18.950C19.270,19.030 19.540,18.950 19.660,18.730L21.660,15.270C21.780,15.050 21.730,14.780 21.540,14.630L19.430,12.970Z" fill="#000"/></svg>
<div class="a" style="left:221px;top:254px;width:1px;height:38px;background:#d4d4d4"></div>
<div class="a" style="left:320px;top:254px;width:1px;height:38px;background:#d4d4d4"></div>
<div class="a" style="left:357px;top:254px;width:1px;height:38px;background:#d4d4d4"></div>
<svg class="a dj" style="left:116px;top:297px" width="640" height="478" viewBox="116 297 640 478"><rect x="116" y="297" width="640" height="478" fill="#fff"/><clipPath id="axc"><rect x="196" y="354" width="496" height="368"/></clipPath><clipPath id="axl"><rect x="196" y="354" width="204.500" height="368"/></clipPath><g clip-path="url(#axl)" fill="none" stroke="#1f77b4" stroke-width="2.080"><path d="M218.7 526.9V527.5M218.9 526.9V527.4M219.1 527.8V528.3M219.3 527.8V528.4M219.6 528.1V528.7M219.8 527.7V528.2M220.0 528.6V529.1M220.2 528.7V529.2M220.5 528.8V529.4M220.7 529.5V530.1M220.9 529.3V529.9M221.1 529.6V530.2M221.3 529.9V530.5M221.6 529.6V530.2M221.8 531.0V531.6M222.0 531.1V531.7M222.2 531.0V531.6M222.4 531.1V531.7M222.7 531.5V532.1M222.9 532.2V532.8M223.1 532.2V532.8M223.3 532.0V532.6M223.6 533.0V533.6M223.8 533.2V533.8M224.0 533.7V534.3M224.2 534.2V534.8M224.4 534.5V535.1M224.7 535.3V535.9M224.9 535.0V535.6M225.1 534.6V535.2M225.3 535.8V536.4M225.5 536.4V537.0M225.8 536.6V537.2M226.0 537.7V538.3M226.2 537.7V538.3M226.4 537.8V538.5M226.7 538.4V539.0M226.9 538.4V539.1M227.1 539.1V539.7M227.3 539.2V539.8M227.5 540.0V540.6M227.8 540.2V540.9M228.0 540.4V541.0M228.2 541.1V541.7M228.4 541.6V542.3M228.6 541.7V542.4M228.9 541.8V542.5M229.1 542.7V543.4M229.3 543.2V543.8M229.5 543.0V543.6M229.8 543.6V544.2M230.0 544.2V544.9M230.2 544.4V545.1M230.4 544.5V545.1M230.6 544.4V545.1M230.9 545.2V545.8M231.1 546.0V546.7M231.3 546.5V547.2M231.5 546.8V547.5M231.7 546.8V547.5M232.0 547.3V548.0M232.2 547.3V548.0M232.4 548.4V549.1M232.6 548.5V549.2M232.9 548.6V549.3M233.1 548.4V549.1M233.3 549.6V550.3M233.5 549.5V550.2M233.7 549.4V550.1M234.0 550.5V551.2M234.2 550.2V550.9M234.4 550.9V551.7M234.6 551.7V552.5M234.8 551.5V552.2M235.1 550.9V551.6M235.3 551.8V552.5M235.5 552.2V552.9M235.7 552.4V553.1M236.0 552.6V553.3M236.2 553.1V553.9M236.4 553.0V553.8M236.6 552.8V553.5M236.8 553.3V554.1M237.1 553.3V554.1M237.3 553.1V553.9M237.5 553.7V554.5M237.7 553.9V554.7M237.9 554.4V555.1M238.2 554.6V555.4M238.4 554.5V555.3M238.6 554.4V555.2M238.8 554.2V555.0M239.1 554.4V555.2M239.3 555.2V556.0M239.5 555.5V556.3M239.7 555.5V556.3M239.9 554.8V555.6M240.2 555.2V556.1M240.4 555.1V555.9M240.6 555.2V556.0M240.8 555.2V556.1M241.0 555.1V556.0M241.3 555.2V556.0M241.5 555.6V556.4M241.7 555.6V556.5M241.9 555.6V556.4M242.2 555.4V556.3M242.4 555.4V556.3M242.6 554.8V555.7M242.8 555.4V556.2M243.0 555.0V555.8M243.3 555.0V555.9M243.5 554.8V555.6M243.7 554.9V555.7M243.9 554.5V555.4M244.1 554.5V555.4M244.4 554.6V555.5M244.6 554.4V555.3M244.8 554.1V555.0M245.0 553.9V554.8M245.3 552.8V553.7M245.5 553.4V554.3M245.7 552.8V553.7M245.9 553.6V554.5M246.1 553.7V554.6M246.4 552.7V553.6M246.6 553.0V553.9M246.8 552.7V553.6M247.0 551.4V552.3M247.2 551.4V552.3M247.5 551.5V552.4M247.7 552.0V552.9M247.9 550.3V551.2M248.1 550.7V551.6M248.4 550.0V550.9M248.6 550.0V550.9M248.8 549.9V550.8M249.0 550.6V551.5M249.2 549.8V550.8M249.5 548.3V549.2M249.7 549.4V550.3M249.9 548.3V549.3M250.1 548.0V549.0M250.3 547.8V548.8M250.6 547.7V548.6M250.8 547.2V548.1M251.0 546.6V547.6M251.2 547.5V548.5M251.5 546.8V547.8M251.7 545.1V546.1M251.9 544.7V545.6M252.1 545.2V546.1M252.3 545.7V546.6M252.6 544.0V544.9M252.8 544.0V545.0M253.0 544.1V545.1M253.2 542.8V543.8M253.5 543.3V544.3M253.7 541.6V542.6M253.9 541.7V542.7M254.1 541.3V542.3M254.3 540.9V541.9M254.6 540.2V541.2M254.8 540.1V541.1M255.0 539.7V540.7M255.2 540.4V541.4M255.4 539.5V540.5M255.7 539.0V540.0M255.9 537.7V538.8M256.1 538.6V539.6M256.3 538.4V539.4M256.6 537.2V538.2M256.8 536.9V537.9M257.0 537.4V538.5M257.2 536.5V537.5M257.4 535.2V536.2M257.7 535.5V536.5M257.9 535.7V536.7M258.1 535.2V536.3M258.3 533.8V534.9M258.5 534.1V535.2M258.8 534.0V535.1M259.0 534.1V535.2M259.2 533.3V534.4M259.4 531.8V532.9M259.7 531.1V532.2M259.9 532.3V533.4M260.1 531.7V532.8M260.3 532.2V533.3M260.5 530.1V531.2M260.8 530.3V531.5M261.0 530.8V531.9M261.2 529.9V531.1M261.4 529.3V530.4M261.6 529.5V530.7M261.9 528.9V530.1M262.1 528.4V529.6M262.3 528.7V529.8M262.5 527.6V528.8M262.8 527.9V529.0M263.0 528.1V529.3M263.2 527.5V528.6M263.4 527.1V528.3M263.6 528.7V529.8M263.9 527.2V528.3M264.1 526.9V528.0M264.3 526.7V527.9M264.5 527.9V529.1M264.7 526.6V527.8M265.0 525.7V526.9M265.2 526.6V527.8M265.4 525.1V526.4M265.6 525.7V526.9M265.9 525.2V526.4M266.1 524.4V525.7M266.3 525.8V527.1M266.5 525.0V526.2M266.7 525.6V526.8M267.0 525.1V526.3M267.2 525.0V526.3M267.4 526.1V527.4M267.6 524.8V526.1M267.8 524.8V526.0M268.1 524.8V526.0M268.3 523.2V524.5M268.5 524.6V525.9M268.7 524.5V525.8M269.0 525.3V526.6M269.2 526.2V527.5M269.4 524.4V525.7M269.6 524.7V526.0M269.8 525.2V526.5M270.1 524.4V525.7M270.3 526.0V527.3M270.5 525.5V526.8M270.7 524.9V526.2M270.9 525.6V526.9M271.2 525.8V527.1M271.4 524.7V526.0M271.6 525.2V526.5M271.8 525.6V527.0M272.1 525.3V526.6M272.3 525.9V527.3M272.5 526.7V528.0M272.7 525.9V527.3M272.9 526.9V528.3M273.2 527.2V528.5M273.4 527.5V528.8M273.6 526.1V527.5M273.8 527.1V528.5M274.0 527.8V529.2M274.3 527.6V529.0M274.5 527.9V529.3M274.7 529.5V530.9M274.9 528.4V529.8M275.2 528.8V530.2M275.4 529.8V531.3M275.6 531.1V532.5M275.8 529.0V530.5M276.0 529.5V531.0M276.3 530.8V532.2M276.5 530.8V532.3M276.7 532.5V533.9M276.9 532.0V533.4M277.1 531.9V533.3M277.4 531.5V533.0M277.6 532.4V533.9M277.8 532.2V533.7M278.0 531.7V533.2M278.3 533.2V534.7M278.5 532.9V534.4M278.7 533.9V535.4M278.9 534.4V535.9M279.1 533.3V534.9M279.4 535.5V537.0M279.6 535.4V536.9M279.8 535.2V536.8M280.0 535.8V537.4M280.2 536.3V537.8M280.5 536.1V537.7M280.7 538.1V539.6M280.9 537.3V538.9M281.1 537.6V539.1M281.4 539.2V540.8M281.6 539.4V541.0M281.8 539.4V541.0M282.0 539.8V541.4M282.2 539.8V541.3M282.5 540.0V541.5M282.7 542.1V543.7M282.9 541.9V543.5M283.1 542.1V543.7M283.3 540.8V542.4M283.6 543.0V544.7M283.8 542.9V544.6M284.0 543.8V545.5M284.2 543.9V545.6M284.5 543.4V545.0M284.7 544.4V546.0M284.9 545.6V547.3M285.1 545.3V547.0M285.3 545.5V547.2M285.6 546.6V548.3M285.8 544.9V546.5M286.0 546.4V548.1M286.2 547.1V548.9M286.4 545.5V547.2M286.7 548.7V550.4M286.9 547.7V549.4M287.1 548.4V550.2M287.3 548.4V550.1M287.6 547.9V549.6M287.8 549.2V551.0M288.0 549.9V551.6M288.2 551.1V552.8M288.4 549.8V551.6M288.7 550.5V552.2M288.9 551.4V553.2M289.1 551.3V553.1M289.3 550.1V551.9M289.5 551.2V553.0M289.8 551.6V553.4M290.0 551.0V552.8M290.2 551.5V553.3M290.4 550.7V552.5M290.7 551.5V553.3M290.9 552.0V553.8M291.1 552.6V554.5M291.3 551.9V553.7M291.5 551.4V553.3M291.8 553.1V555.1M292.0 554.2V556.1M292.2 554.1V556.0M292.4 554.3V556.2M292.6 553.5V555.4M292.9 554.6V556.5M293.1 553.2V555.1M293.3 554.2V556.2M293.5 553.5V555.5M293.8 555.4V557.4M294.0 554.7V556.7M294.2 554.8V556.8M294.4 554.1V556.1M294.6 553.5V555.5M294.9 555.9V557.9M295.1 554.9V556.9M295.3 553.4V555.4M295.5 554.8V556.9M295.7 552.4V554.4M296.0 556.0V558.1M296.2 555.1V557.1M296.4 554.9V556.9M296.6 554.5V556.6M296.9 553.6V555.7M297.1 554.2V556.3M297.3 554.0V556.1M297.5 554.8V556.9M297.7 555.3V557.4M298.0 554.3V556.4M298.2 556.0V558.1M298.4 553.4V555.6M298.6 552.2V554.3M298.8 553.6V555.7M299.1 553.6V555.7M299.3 553.6V555.7M299.5 553.6V555.8M299.7 553.6V555.7M300.0 553.0V555.2M300.2 552.9V555.0M300.4 552.8V555.0M300.6 552.9V555.1M300.8 551.9V554.1M301.1 552.3V554.5M301.3 553.1V555.3M301.5 551.7V554.0M301.7 550.6V552.7M301.9 550.8V553.1M302.2 551.0V553.2M302.4 549.6V551.8M302.6 551.4V553.7M302.8 551.5V553.7M303.1 549.6V551.8M303.3 550.9V553.2M303.5 549.5V551.8M303.7 548.8V551.1M303.9 547.4V549.7M304.2 547.2V549.4M304.4 546.4V548.7M304.6 546.4V548.7M304.8 547.3V549.7M305.0 545.6V547.9M305.3 546.9V549.3M305.5 545.4V547.7M305.7 544.5V546.9M305.9 545.1V547.5M306.2 544.7V547.1M306.4 544.7V547.1M306.6 542.1V544.4M306.8 544.1V546.5M307.0 543.6V546.0M307.3 542.0V544.4M307.5 544.1V546.5M307.7 541.0V543.4M307.9 541.8V544.2M308.1 539.9V542.3M308.4 540.4V542.8M308.6 542.3V544.8M308.8 539.8V542.3M309.0 541.5V544.0M309.3 540.3V542.8M309.5 538.1V540.5M309.7 538.4V540.8M309.9 537.7V540.2M310.1 538.1V540.6M310.4 535.9V538.3M310.6 536.6V539.1M310.8 535.0V537.6M311.0 535.5V538.1M311.2 535.1V537.7M311.5 534.0V536.6M311.7 536.6V539.2M311.9 533.2V535.8M312.1 531.3V533.9M312.4 531.1V533.8M312.6 534.0V536.5M312.8 531.2V533.9M313.0 533.2V535.8M313.2 531.6V534.3M313.5 530.3V532.9M313.7 530.6V533.2M313.9 529.8V532.5M314.1 530.4V533.0M314.3 529.6V532.3M314.6 529.2V531.9M314.8 529.6V532.3M315.0 529.9V532.7M315.2 529.5V532.2M315.5 529.0V531.7M315.7 530.8V533.6M315.9 528.8V531.6M316.1 527.4V530.2M316.3 529.1V531.9M316.6 527.4V530.2M316.8 526.5V529.4M317.0 524.8V527.7M317.2 525.7V528.6M317.4 526.0V528.9M317.7 526.3V529.1M317.9 526.9V529.8M318.1 524.7V527.6M318.3 526.2V529.1M318.6 524.0V527.0M318.8 524.2V527.2M319.0 525.5V528.4M319.2 525.2V528.2M319.4 524.9V527.9M319.7 524.4V527.4M319.9 527.1V530.1M320.1 523.4V526.5M320.3 524.0V527.0M320.5 522.6V525.7M320.8 521.9V524.9M321.0 522.7V525.8M321.2 524.2V527.2M321.4 523.7V526.8M321.7 523.5V526.6M321.9 524.0V527.1M322.1 524.7V527.8M322.3 522.9V526.0M322.5 524.2V527.3M322.8 524.4V527.6M323.0 524.1V527.2M323.2 524.0V527.2M323.4 526.1V529.3M323.6 523.5V526.7M323.9 524.1V527.4M324.1 523.1V526.2M324.3 525.1V528.2M324.5 523.3V526.5M324.8 523.2V526.5M325.0 521.7V525.0M325.2 525.4V528.6M325.4 523.6V526.9M325.6 526.3V529.5M325.9 524.1V527.3M326.1 523.7V527.0M326.3 523.3V526.5M326.5 525.4V528.7M326.7 526.6V529.9M327.0 525.4V528.7M327.2 523.1V526.4M327.4 526.8V530.1M327.6 525.5V528.9M327.9 524.1V527.5M328.1 528.0V531.3M328.3 525.8V529.2M328.5 526.6V530.1M328.7 525.7V529.1M329.0 525.0V528.5M329.2 526.8V530.2M329.4 526.8V530.3M329.6 529.4V532.8M329.8 529.2V532.7M330.1 526.2V529.7M330.3 527.8V531.3M330.5 527.9V531.4M330.7 527.3V530.8M331.0 528.9V532.4M331.2 530.3V533.8M331.4 527.0V530.5M331.6 531.4V535.0M331.8 529.1V532.7M332.1 527.9V531.4M332.3 534.2V537.8M332.5 534.4V538.0M332.7 530.6V534.3M332.9 530.9V534.6M333.2 531.4V535.1M333.4 537.2V540.9M333.6 531.8V535.4M333.8 537.6V541.3M334.1 533.1V536.7M334.3 534.0V537.7M334.5 535.6V539.4M334.7 539.8V543.5M334.9 538.2V542.0M335.2 533.2V536.9M335.4 536.0V539.6M335.6 533.9V537.8M335.8 536.1V539.9M336.0 537.3V541.2M336.3 535.2V539.1M336.5 539.1V543.0M336.7 540.2V544.1M336.9 542.2V546.1M337.2 536.2V540.1M337.4 538.3V542.2M337.6 542.3V546.3M337.8 542.1V546.0M338.0 538.5V542.4M338.3 544.5V548.6M338.5 543.3V547.3M338.7 542.1V546.1M338.9 544.9V548.9M339.1 542.2V546.3M339.4 540.2V544.3M339.6 545.5V549.5M339.8 545.0V548.9M340.0 546.9V551.1M340.3 544.4V548.5M340.5 547.5V551.7M340.7 542.6V546.9M340.9 546.8V551.0M341.1 548.0V552.2M341.4 546.3V550.6M341.6 545.1V549.3M341.8 554.0V558.4M342.0 546.4V550.6M342.2 548.1V552.4M342.5 547.5V551.8M342.7 550.5V554.9M342.9 548.5V552.8M343.1 546.4V550.6M343.4 551.9V556.5M343.6 551.4V555.9M343.8 549.3V553.7M344.0 554.0V558.5M344.2 548.9V553.3M344.5 551.2V555.7M344.7 550.1V554.6M344.9 547.5V552.1M345.1 550.5V555.0M345.3 550.1V554.7M345.6 553.1V557.6M345.8 550.5V555.1M346.0 552.7V557.3M346.2 549.9V554.5M346.5 551.7V556.3M346.7 551.7V556.3M346.9 554.6V559.2M347.1 549.7V554.3M347.3 550.1V554.7M347.6 549.8V554.5M347.8 551.3V556.1M348.0 552.8V557.5M348.2 550.4V555.1M348.4 551.9V556.8M348.7 552.6V557.3M348.9 550.5V555.1M349.1 552.0V557.0M349.3 547.2V552.2M349.6 553.2V558.1M349.8 547.6V552.5M350.0 551.5V556.3M350.2 552.4V557.4M350.4 552.7V557.6M350.7 548.2V553.0M350.9 555.4V560.4M351.1 552.1V557.3M351.3 557.2V562.4M351.5 554.6V559.6M351.8 552.6V557.9M352.0 553.0V558.1M352.2 556.3V561.6M352.4 555.1V560.5M352.7 550.8V556.0M352.9 549.3V554.5M353.1 554.4V559.7M353.3 552.7V557.9M353.5 551.7V557.0M353.8 553.0V558.4M354.0 553.2V558.5M354.2 551.1V556.5M354.4 549.8V555.1M354.6 545.8V550.9M354.9 550.7V555.8M355.1 552.5V557.9M355.3 553.0V558.3M355.5 550.8V556.2M355.8 544.7V550.1M356.0 553.1V558.5M356.2 548.0V553.6M356.4 549.7V555.3M356.6 550.9V556.4M356.9 549.7V555.2M357.1 544.9V550.5M357.3 550.8V556.3M357.5 546.2V551.6M357.7 547.1V552.6M358.0 545.8V551.3M358.2 546.6V552.2M358.4 544.0V549.5M358.6 546.1V551.7M358.9 541.1V546.5M359.1 547.9V553.7M359.3 547.8V553.4M359.5 550.5V556.3M359.7 542.1V547.9M360.0 543.6V549.2M360.2 547.3V553.1M360.4 543.8V549.4M360.6 539.7V545.4M360.8 543.6V549.2M361.1 540.8V546.9M361.3 538.7V544.4M361.5 540.0V545.7M361.7 544.5V550.3M362.0 538.7V544.8M362.2 539.1V545.4M362.4 539.5V545.4M362.6 537.4V543.3M362.8 536.3V542.2M363.1 538.9V544.7M363.3 539.7V545.7M363.5 536.4V542.5M363.7 535.5V541.7M363.9 537.2V543.3M364.2 529.3V535.4M364.4 537.2V543.2M364.6 534.1V540.1M364.8 532.6V538.9M365.1 534.2V540.2M365.3 534.5V540.6M365.5 535.9V542.2M365.7 533.1V539.6M365.9 531.3V537.5M366.2 530.2V536.4M366.4 533.3V539.9M366.6 538.2V544.5M366.8 532.6V538.8M367.0 524.6V531.3M367.3 534.2V540.5M367.5 534.8V541.3M367.7 528.5V534.9M367.9 528.0V534.2M368.2 528.4V534.9M368.4 528.5V534.9M368.6 529.0V535.5M368.8 529.1V535.9M369.0 524.2V530.7M369.3 530.4V537.2M369.5 523.5V530.1M369.7 526.1V532.8M369.9 527.8V534.6M370.1 522.7V530.0M370.4 525.1V531.9M370.6 522.4V529.4M370.8 523.0V530.1M371.0 526.2V533.1M371.3 521.1V528.2M371.5 524.9V532.1M371.7 519.9V526.6M371.9 521.0V528.2M372.1 525.3V532.4M372.4 524.6V531.4M372.6 527.1V534.1M372.8 524.2V531.4M373.0 525.4V532.7M373.2 520.2V527.3M373.5 521.1V528.2M373.7 521.5V528.7M373.9 524.0V531.2M374.1 522.9V530.3M374.4 525.3V532.6M374.6 519.8V527.4M374.8 526.9V534.2M375.0 520.9V528.2M375.2 518.4V526.1M375.5 522.8V530.3M375.7 523.2V530.8M375.9 514.6V522.1M376.1 524.4V532.0M376.3 523.2V530.6M376.6 518.3V525.7M376.8 525.0V532.2M377.0 519.9V527.6M377.2 521.5V529.1M377.5 518.0V525.9M377.7 531.2V538.8M377.9 527.9V535.3M378.1 515.0V522.5M378.3 518.7V526.2M378.6 521.3V529.0M378.8 527.7V535.8M379.0 527.9V535.8M379.2 525.7V533.8M379.4 525.6V533.8M379.7 516.3V525.1M379.9 528.7V536.6M380.1 522.6V530.9M380.3 515.2V523.4M380.6 522.4V530.4M380.8 527.8V536.0M381.0 524.2V532.4M381.2 522.0V530.2M381.4 526.9V535.2M381.7 518.8V526.9M381.9 527.9V536.5M382.1 523.7V531.9M382.3 527.6V535.8M382.5 522.9V531.4M382.8 527.9V535.7M383.0 527.7V536.2M383.2 524.5V533.2M383.4 525.5V533.7M383.7 530.9V539.6M383.9 534.4V543.1M384.1 522.1V530.5M384.3 536.6V545.4M384.5 522.4V531.1M384.8 530.6V539.3M385.0 529.5V538.1M385.2 527.6V535.8M385.4 535.8V544.3M385.6 536.3V545.4M385.9 523.3V532.2M386.1 532.1V540.9M386.3 525.2V533.9M386.5 532.4V540.9M386.8 531.8V540.4M387.0 523.6V533.1M387.2 527.9V536.6M387.4 523.0V531.9M387.6 532.7V541.5M387.9 536.0V545.3M388.1 536.0V545.1M388.3 535.4V544.7M388.5 541.1V549.9M388.7 531.9V541.3M389.0 533.4V542.4M389.2 525.4V534.8M389.4 529.1V539.7M389.6 528.2V537.9M389.9 520.3V529.7M390.1 529.8V539.1M390.3 533.8V543.2M390.5 527.6V536.9M390.7 537.6V546.7M391.0 539.9V549.8M391.2 530.8V540.6M391.4 540.8V550.6M391.6 534.9V545.1M391.9 548.7V558.4M392.1 545.7V555.8M392.3 536.4V546.1M392.5 533.9V543.1M392.7 534.1V543.5M393.0 540.9V550.7M393.2 536.0V545.8M393.4 549.7V560.0M393.6 555.1V565.3M393.8 545.9V555.6M394.1 545.1V555.8M394.3 553.3V563.9M394.5 541.5V551.2M394.7 544.3V554.3M395.0 544.6V554.7M395.2 532.4V542.4M395.4 537.6V548.1M395.6 549.0V559.9M395.8 543.5V553.3M396.1 541.7V552.0M396.3 545.4V556.5M396.5 550.1V561.1M396.7 542.8V552.9M396.9 543.3V554.7M397.2 550.1V560.9M397.4 541.9V553.1M397.6 549.1V560.7M397.8 544.0V554.5M398.1 545.6V556.3M398.3 546.9V557.5M398.5 544.1V554.6M398.7 549.7V560.5M398.9 546.1V556.3M399.2 545.9V557.1M399.4 550.6V561.6M399.6 551.8V563.0M399.8 541.0V552.2M400.0 547.3V558.4M400.3 550.3V561.5M400.5 551.8V563.0M400.7 549.7V560.7M400.9 543.9V555.3M401.2 551.0V562.3M401.4 545.4V557.6M401.6 555.6V567.5M401.8 548.8V559.9M402.0 539.1V550.1M402.3 546.2V557.5M402.5 545.7V557.8M402.7 558.0V570.1M402.9 544.3V557.2M403.1 542.7V554.7M403.4 542.0V552.7M403.6 549.3V560.6M403.8 541.1V553.1"/><path d="M218.7 527.2L218.9 527.2L219.1 528.0L219.3 528.1L219.6 528.4L219.8 528.0L220.0 528.9L220.2 528.9L220.5 529.1L220.7 529.8L220.9 529.6L221.1 529.9L221.3 530.2L221.6 529.9L221.8 531.3L222.0 531.4L222.2 531.3L222.4 531.4L222.7 531.8L222.9 532.5L223.1 532.5L223.3 532.3L223.6 533.3L223.8 533.5L224.0 534.0L224.2 534.5L224.4 534.8L224.7 535.6L224.9 535.3L225.1 534.9L225.3 536.1L225.5 536.7L225.8 536.9L226.0 538.0L226.2 538.0L226.4 538.1L226.7 538.7L226.9 538.8L227.1 539.4L227.3 539.5L227.5 540.3L227.8 540.6L228.0 540.7L228.2 541.4L228.4 541.9L228.6 542.0L228.9 542.1L229.1 543.0L229.3 543.5L229.5 543.3L229.8 543.9L230.0 544.6L230.2 544.8L230.4 544.8L230.6 544.8L230.9 545.5L231.1 546.4L231.3 546.8L231.5 547.2L231.7 547.2L232.0 547.7L232.2 547.7L232.4 548.7L232.6 548.9L232.9 549.0L233.1 548.7L233.3 550.0L233.5 549.8L233.7 549.8L234.0 550.9L234.2 550.6L234.4 551.3L234.6 552.1L234.8 551.9L235.1 551.3L235.3 552.2L235.5 552.5L235.7 552.8L236.0 552.9L236.2 553.5L236.4 553.4L236.6 553.1L236.8 553.7L237.1 553.7L237.3 553.5L237.5 554.1L237.7 554.3L237.9 554.7L238.2 555.0L238.4 554.9L238.6 554.8L238.8 554.6L239.1 554.8L239.3 555.6L239.5 555.9L239.7 555.9L239.9 555.2L240.2 555.7L240.4 555.5L240.6 555.6L240.8 555.6L241.0 555.6L241.3 555.6L241.5 556.0L241.7 556.1L241.9 556.0L242.2 555.9L242.4 555.9L242.6 555.3L242.8 555.8L243.0 555.4L243.3 555.5L243.5 555.2L243.7 555.3L243.9 555.0L244.1 554.9L244.4 555.0L244.6 554.9L244.8 554.5L245.0 554.3L245.3 553.3L245.5 553.9L245.7 553.2L245.9 554.1L246.1 554.1L246.4 553.2L246.6 553.4L246.8 553.1L247.0 551.8L247.2 551.9L247.5 552.0L247.7 552.5L247.9 550.8L248.1 551.2L248.4 550.5L248.6 550.5L248.8 550.4L249.0 551.1L249.2 550.3L249.5 548.8L249.7 549.9L249.9 548.8L250.1 548.5L250.3 548.3L250.6 548.2L250.8 547.7L251.0 547.1L251.2 548.0L251.5 547.3L251.7 545.6L251.9 545.1L252.1 545.7L252.3 546.2L252.6 544.5L252.8 544.5L253.0 544.6L253.2 543.3L253.5 543.8L253.7 542.1L253.9 542.2L254.1 541.8L254.3 541.4L254.6 540.7L254.8 540.6L255.0 540.2L255.2 540.9L255.4 540.0L255.7 539.5L255.9 538.3L256.1 539.1L256.3 538.9L256.6 537.7L256.8 537.4L257.0 537.9L257.2 537.0L257.4 535.7L257.7 536.0L257.9 536.2L258.1 535.7L258.3 534.4L258.5 534.6L258.8 534.5L259.0 534.6L259.2 533.8L259.4 532.3L259.7 531.7L259.9 532.8L260.1 532.3L260.3 532.7L260.5 530.7L260.8 530.9L261.0 531.3L261.2 530.5L261.4 529.9L261.6 530.1L261.9 529.5L262.1 529.0L262.3 529.3L262.5 528.2L262.8 528.4L263.0 528.7L263.2 528.0L263.4 527.7L263.6 529.3L263.9 527.7L264.1 527.4L264.3 527.3L264.5 528.5L264.7 527.2L265.0 526.3L265.2 527.2L265.4 525.8L265.6 526.3L265.9 525.8L266.1 525.1L266.3 526.5L266.5 525.6L266.7 526.2L267.0 525.7L267.2 525.7L267.4 526.7L267.6 525.5L267.8 525.4L268.1 525.4L268.3 523.9L268.5 525.3L268.7 525.2L269.0 525.9L269.2 526.9L269.4 525.1L269.6 525.3L269.8 525.9L270.1 525.0L270.3 526.7L270.5 526.2L270.7 525.5L270.9 526.2L271.2 526.5L271.4 525.3L271.6 525.9L271.8 526.3L272.1 526.0L272.3 526.6L272.5 527.3L272.7 526.6L272.9 527.6L273.2 527.9L273.4 528.1L273.6 526.8L273.8 527.8L274.0 528.5L274.3 528.3L274.5 528.6L274.7 530.2L274.9 529.1L275.2 529.5L275.4 530.6L275.6 531.8L275.8 529.8L276.0 530.3L276.3 531.5L276.5 531.5L276.7 533.2L276.9 532.7L277.1 532.6L277.4 532.2L277.6 533.2L277.8 532.9L278.0 532.5L278.3 534.0L278.5 533.7L278.7 534.7L278.9 535.2L279.1 534.1L279.4 536.2L279.6 536.2L279.8 536.0L280.0 536.6L280.2 537.1L280.5 536.9L280.7 538.9L280.9 538.1L281.1 538.3L281.4 540.0L281.6 540.2L281.8 540.2L282.0 540.6L282.2 540.6L282.5 540.7L282.7 542.9L282.9 542.7L283.1 542.9L283.3 541.6L283.6 543.9L283.8 543.7L284.0 544.6L284.2 544.7L284.5 544.2L284.7 545.2L284.9 546.5L285.1 546.1L285.3 546.4L285.6 547.5L285.8 545.7L286.0 547.2L286.2 548.0L286.4 546.4L286.7 549.5L286.9 548.5L287.1 549.3L287.3 549.2L287.6 548.7L287.8 550.1L288.0 550.7L288.2 551.9L288.4 550.7L288.7 551.3L288.9 552.3L289.1 552.2L289.3 551.0L289.5 552.1L289.8 552.5L290.0 551.9L290.2 552.4L290.4 551.6L290.7 552.4L290.9 552.9L291.1 553.6L291.3 552.8L291.5 552.4L291.8 554.1L292.0 555.1L292.2 555.1L292.4 555.2L292.6 554.5L292.9 555.5L293.1 554.2L293.3 555.2L293.5 554.5L293.8 556.4L294.0 555.7L294.2 555.8L294.4 555.1L294.6 554.5L294.9 556.9L295.1 555.9L295.3 554.4L295.5 555.8L295.7 553.4L296.0 557.0L296.2 556.1L296.4 555.9L296.6 555.6L296.9 554.6L297.1 555.3L297.3 555.1L297.5 555.9L297.7 556.3L298.0 555.4L298.2 557.1L298.4 554.5L298.6 553.2L298.8 554.6L299.1 554.7L299.3 554.7L299.5 554.7L299.7 554.6L300.0 554.1L300.2 553.9L300.4 553.9L300.6 554.0L300.8 553.0L301.1 553.4L301.3 554.2L301.5 552.9L301.7 551.6L301.9 552.0L302.2 552.1L302.4 550.7L302.6 552.6L302.8 552.6L303.1 550.7L303.3 552.0L303.5 550.6L303.7 549.9L303.9 548.5L304.2 548.3L304.4 547.6L304.6 547.6L304.8 548.5L305.0 546.7L305.3 548.1L305.5 546.6L305.7 545.7L305.9 546.3L306.2 545.9L306.4 545.9L306.6 543.3L306.8 545.3L307.0 544.8L307.3 543.2L307.5 545.3L307.7 542.2L307.9 543.0L308.1 541.1L308.4 541.6L308.6 543.6L308.8 541.0L309.0 542.8L309.3 541.5L309.5 539.3L309.7 539.6L309.9 539.0L310.1 539.4L310.4 537.1L310.6 537.9L310.8 536.3L311.0 536.8L311.2 536.4L311.5 535.3L311.7 537.9L311.9 534.5L312.1 532.6L312.4 532.5L312.6 535.3L312.8 532.6L313.0 534.5L313.2 532.9L313.5 531.6L313.7 531.9L313.9 531.1L314.1 531.7L314.3 531.0L314.6 530.6L314.8 530.9L315.0 531.3L315.2 530.9L315.5 530.4L315.7 532.2L315.9 530.2L316.1 528.8L316.3 530.5L316.6 528.8L316.8 528.0L317.0 526.3L317.2 527.2L317.4 527.5L317.7 527.7L317.9 528.4L318.1 526.2L318.3 527.7L318.6 525.5L318.8 525.7L319.0 526.9L319.2 526.7L319.4 526.4L319.7 525.9L319.9 528.6L320.1 525.0L320.3 525.5L320.5 524.2L320.8 523.4L321.0 524.2L321.2 525.7L321.4 525.2L321.7 525.1L321.9 525.5L322.1 526.2L322.3 524.5L322.5 525.7L322.8 526.0L323.0 525.7L323.2 525.6L323.4 527.7L323.6 525.1L323.9 525.7L324.1 524.6L324.3 526.6L324.5 524.9L324.8 524.8L325.0 523.4L325.2 527.0L325.4 525.3L325.6 527.9L325.9 525.7L326.1 525.3L326.3 524.9L326.5 527.1L326.7 528.3L327.0 527.0L327.2 524.7L327.4 528.5L327.6 527.2L327.9 525.8L328.1 529.7L328.3 527.5L328.5 528.3L328.7 527.4L329.0 526.8L329.2 528.5L329.4 528.6L329.6 531.1L329.8 530.9L330.1 528.0L330.3 529.5L330.5 529.7L330.7 529.0L331.0 530.7L331.2 532.1L331.4 528.7L331.6 533.2L331.8 530.9L332.1 529.6L332.3 536.0L332.5 536.2L332.7 532.4L332.9 532.7L333.2 533.2L333.4 539.0L333.6 533.6L333.8 539.5L334.1 534.9L334.3 535.8L334.5 537.5L334.7 541.7L334.9 540.1L335.2 535.0L335.4 537.8L335.6 535.8L335.8 538.0L336.0 539.3L336.3 537.1L336.5 541.1L336.7 542.2L336.9 544.2L337.2 538.2L337.4 540.3L337.6 544.3L337.8 544.0L338.0 540.5L338.3 546.6L338.5 545.3L338.7 544.1L338.9 546.9L339.1 544.3L339.4 542.3L339.6 547.5L339.8 547.0L340.0 549.0L340.3 546.5L340.5 549.6L340.7 544.8L340.9 548.9L341.1 550.1L341.4 548.4L341.6 547.2L341.8 556.2L342.0 548.5L342.2 550.3L342.5 549.6L342.7 552.7L342.9 550.7L343.1 548.5L343.4 554.2L343.6 553.7L343.8 551.5L344.0 556.2L344.2 551.1L344.5 553.4L344.7 552.4L344.9 549.8L345.1 552.8L345.3 552.4L345.6 555.3L345.8 552.8L346.0 555.0L346.2 552.2L346.5 554.0L346.7 554.0L346.9 556.9L347.1 552.0L347.3 552.4L347.6 552.2L347.8 553.7L348.0 555.1L348.2 552.7L348.4 554.3L348.7 555.0L348.9 552.8L349.1 554.5L349.3 549.7L349.6 555.6L349.8 550.1L350.0 553.9L350.2 554.9L350.4 555.2L350.7 550.6L350.9 557.9L351.1 554.7L351.3 559.8L351.5 557.1L351.8 555.2L352.0 555.5L352.2 558.9L352.4 557.8L352.7 553.4L352.9 551.9L353.1 557.0L353.3 555.3L353.5 554.4L353.8 555.7L354.0 555.9L354.2 553.8L354.4 552.4L354.6 548.3L354.9 553.3L355.1 555.2L355.3 555.7L355.5 553.5L355.8 547.4L356.0 555.8L356.2 550.8L356.4 552.5L356.6 553.7L356.9 552.4L357.1 547.7L357.3 553.5L357.5 548.9L357.7 549.8L358.0 548.5L358.2 549.4L358.4 546.8L358.6 548.9L358.9 543.8L359.1 550.8L359.3 550.6L359.5 553.4L359.7 545.0L360.0 546.4L360.2 550.2L360.4 546.6L360.6 542.5L360.8 546.4L361.1 543.8L361.3 541.6L361.5 542.8L361.7 547.4L362.0 541.7L362.2 542.2L362.4 542.5L362.6 540.4L362.8 539.3L363.1 541.8L363.3 542.7L363.5 539.5L363.7 538.6L363.9 540.2L364.2 532.3L364.4 540.2L364.6 537.1L364.8 535.8L365.1 537.2L365.3 537.6L365.5 539.1L365.7 536.4L365.9 534.4L366.2 533.3L366.4 536.6L366.6 541.3L366.8 535.7L367.0 528.0L367.3 537.4L367.5 538.0L367.7 531.7L367.9 531.1L368.2 531.7L368.4 531.7L368.6 532.3L368.8 532.5L369.0 527.5L369.3 533.8L369.5 526.8L369.7 529.4L369.9 531.2L370.1 526.3L370.4 528.5L370.6 525.9L370.8 526.5L371.0 529.6L371.3 524.6L371.5 528.5L371.7 523.3L371.9 524.6L372.1 528.8L372.4 528.0L372.6 530.6L372.8 527.8L373.0 529.0L373.2 523.7L373.5 524.6L373.7 525.1L373.9 527.6L374.1 526.6L374.4 528.9L374.6 523.6L374.8 530.6L375.0 524.6L375.2 522.3L375.5 526.5L375.7 527.0L375.9 518.4L376.1 528.2L376.3 526.9L376.6 522.0L376.8 528.6L377.0 523.7L377.2 525.3L377.5 521.9L377.7 535.0L377.9 531.6L378.1 518.8L378.3 522.5L378.6 525.1L378.8 531.7L379.0 531.8L379.2 529.7L379.4 529.7L379.7 520.7L379.9 532.7L380.1 526.8L380.3 519.3L380.6 526.4L380.8 531.9L381.0 528.3L381.2 526.1L381.4 531.1L381.7 522.8L381.9 532.2L382.1 527.8L382.3 531.7L382.5 527.2L382.8 531.8L383.0 532.0L383.2 528.8L383.4 529.6L383.7 535.3L383.9 538.8L384.1 526.3L384.3 541.0L384.5 526.8L384.8 535.0L385.0 533.8L385.2 531.7L385.4 540.0L385.6 540.8L385.9 527.7L386.1 536.5L386.3 529.5L386.5 536.7L386.8 536.1L387.0 528.3L387.2 532.3L387.4 527.4L387.6 537.1L387.9 540.7L388.1 540.6L388.3 540.1L388.5 545.5L388.7 536.6L389.0 537.9L389.2 530.1L389.4 534.4L389.6 533.1L389.9 525.0L390.1 534.5L390.3 538.5L390.5 532.3L390.7 542.1L391.0 544.9L391.2 535.7L391.4 545.7L391.6 540.0L391.9 553.5L392.1 550.8L392.3 541.2L392.5 538.5L392.7 538.8L393.0 545.8L393.2 540.9L393.4 554.8L393.6 560.2L393.8 550.8L394.1 550.4L394.3 558.6L394.5 546.3L394.7 549.3L395.0 549.6L395.2 537.4L395.4 542.9L395.6 554.5L395.8 548.4L396.1 546.9L396.3 551.0L396.5 555.6L396.7 547.9L396.9 549.0L397.2 555.5L397.4 547.5L397.6 554.9L397.8 549.3L398.1 550.9L398.3 552.2L398.5 549.4L398.7 555.1L398.9 551.2L399.2 551.5L399.4 556.1L399.6 557.4L399.8 546.6L400.0 552.9L400.3 555.9L400.5 557.4L400.7 555.2L400.9 549.6L401.2 556.7L401.4 551.5L401.6 561.6L401.8 554.4L402.0 544.6L402.3 551.8L402.5 551.7L402.7 564.1L402.9 550.7L403.1 548.7L403.4 547.4L403.6 554.9L403.8 547.1" stroke-linejoin="round"/></g><path d="M400.0 538.8L401.1 538.8L401.1 532.2L402.7 532.2L402.7 538.8L407.7 538.8L407.7 524.0L409.9 524.0L409.9 528.9L414.8 528.9L414.8 520.1L418.7 520.1L418.7 505.0L422.5 505.0L422.5 502.4L424.7 502.4L424.7 519.1L426.1 519.1L426.1 508.1L427.7 508.1L427.7 513.6L430.2 513.6L430.2 493.2L432.1 493.2L432.1 507.0L434.0 507.0L434.0 511.4L435.7 511.4L435.7 518.0L437.9 518.0L437.9 500.2L440.1 500.2L440.1 497.1L441.7 497.1L441.7 510.3L443.9 510.3L443.9 526.2L446.1 526.2L446.1 520.1L448.0 520.1L448.0 513.0L450.0 513.0L450.0 531.7L452.2 531.7L452.2 527.8L454.0 527.8L454.0 511.4L456.0 511.4L456.0 503.1L457.6 503.1L457.6 526.7L459.3 526.7L459.3 516.3L462.0 516.3L462.0 499.3L463.5 499.3L463.5 496.2L464.8 496.2L464.8 508.1L466.4 508.1L466.4 492.7L468.1 492.7L468.1 466.0L469.9 466.0L469.9 491.6L471.9 491.6L471.9 427.2L474.1 427.2L474.1 454.8L475.0 454.8L475.0 483.9L476.1 483.9L476.1 456.2L481.8 456.2L481.8 490.5L483.1 490.5L483.1 465.3L485.1 465.3L485.1 456.2L487.0 456.2L487.0 479.5L487.9 479.5L487.9 475.8L490.3 475.8L490.3 400.3L491.9 400.3L491.9 460.8L493.3 460.8L493.3 474.5L495.7 474.5L495.7 495.0L498.2 495.0L498.2 400.3L499.8 400.3L499.8 469.0L501.2 469.0L501.2 486.1L503.3 486.1L503.3 425.2L504.9 425.2L504.9 469.0L507.0 469.0L507.0 482.0L510.1 482.0L510.1 460.8L511.2 460.8L511.2 371.3L513.3 371.3L513.3 460.8L514.2 460.8L514.2 371.3L515.9 371.3L515.9 464.9L517.6 464.9L517.6 419.7L519.0 419.7L519.0 400.3L520.4 400.3L520.4 371.3L530.9 371.3L530.9 400.3L532.3 400.3L532.3 412.9L534.1 412.9L534.1 371.3L536.1 371.3L536.1 400.3L537.2 400.3L537.2 371.3L550.1 371.3L550.1 400.3L551.5 400.3L551.5 412.9L552.3 412.9L552.3 371.3L553.9 371.3L553.9 469.0L555.0 469.0L555.0 371.3L558.7 371.3L558.7 469.0L560.1 469.0L560.1 371.3L563.8 371.3L563.8 469.0L567.2 469.0L567.2 371.3L575.8 371.3L575.8 469.0L576.8 469.0L576.8 371.3L578.8 371.3L578.8 469.0L580.3 469.0L580.3 371.3L582.0 371.3L582.0 400.3L582.9 400.3L582.9 469.0L585.1 469.0L585.1 371.3L589.1 371.3L589.1 469.0L591.2 469.0L591.2 371.3L595.0 371.3L595.0 469.0L605.3 469.0L605.3 371.3L608.7 371.3L608.7 469.0L609.8 469.0L609.8 371.3L611.7 371.3L611.7 469.0L613.9 469.0L613.9 371.3L615.8 371.3L615.8 469.0L618.9 469.0L618.9 371.3L620.7 371.3L620.7 469.0L622.1 469.0L622.1 371.3L623.7 371.3L623.7 469.0L624.8 469.0L624.8 371.3L626.7 371.3L626.7 469.0L627.8 469.0L627.8 371.3L629.9 371.3L629.9 400.3L630.9 400.3L630.9 469.0L639.1 469.0L639.1 371.3L645.0 371.3L645.0 469.0L653.2 469.0L653.2 371.3L654.9 371.3L654.9 469.0L664.1 469.0L664.1 371.3L665.9 371.3L665.9 469.0L670.3 469.0L670.3 607.9L668.9 607.9L668.9 705.7L667.1 705.7L667.1 607.9L661.0 607.9L661.0 705.7L659.1 705.7L659.1 607.9L656.9 607.9L656.9 705.7L654.9 705.7L654.9 607.9L646.7 607.9L646.7 705.7L645.0 705.7L645.0 607.9L636.7 607.9L636.7 705.7L635.0 705.7L635.0 607.9L632.9 607.9L632.9 676.9L631.3 676.9L631.3 607.9L625.8 607.9L625.8 676.9L624.0 676.9L624.0 663.7L622.0 663.7L622.0 705.7L613.1 705.7L613.1 607.9L610.7 607.9L610.7 705.7L607.3 705.7L607.3 607.9L605.5 607.9L605.5 705.7L603.2 705.7L603.2 607.9L600.9 607.9L600.9 705.7L599.1 705.7L599.1 607.9L590.6 607.9L590.6 705.7L588.1 705.7L588.1 676.9L587.0 676.9L587.0 705.7L580.2 705.7L580.2 607.9L578.8 607.9L578.8 705.7L568.0 705.7L568.0 607.9L565.8 607.9L565.8 705.7L558.3 705.7L558.3 607.9L556.9 607.9L556.9 705.7L548.0 705.7L548.0 607.9L546.0 607.9L546.0 705.7L542.3 705.7L542.3 676.9L540.9 676.9L540.9 705.7L539.1 705.7L539.1 615.7L537.8 615.7L537.8 705.7L536.1 705.7L536.1 676.9L534.1 676.9L534.1 607.9L532.0 607.9L532.0 705.7L526.3 705.7L526.3 676.9L523.8 676.9L523.8 705.7L517.2 705.7L517.2 612.0L515.6 612.0L515.6 705.7L512.2 705.7L512.2 615.7L510.8 615.7L510.8 663.7L509.7 663.7L509.7 705.7L508.1 705.7L508.1 676.9L503.3 676.9L503.3 663.7L502.2 663.7L502.2 645.2L500.8 645.2L500.8 663.7L499.2 663.7L499.2 652.0L497.8 652.0L497.8 705.7L496.0 705.7L496.0 663.7L494.6 663.7L494.6 656.8L493.3 656.8L493.3 615.7L492.0 615.7L492.0 663.7L490.3 663.7L490.3 611.6L487.9 611.6L487.9 594.9L486.7 594.9L486.7 599.8L485.1 599.8L485.1 603.7L482.9 603.7L482.9 571.8L481.0 571.8L481.0 589.6L479.1 589.6L479.1 580.8L476.9 580.8L476.9 564.7L475.8 564.7L475.8 593.2L473.8 593.2L473.8 599.8L471.9 599.8L471.9 590.0L470.8 590.0L470.8 596.5L468.6 596.5L468.6 590.0L467.5 590.0L467.5 566.4L465.9 566.4L465.9 582.6L464.0 582.6L464.0 572.9L463.1 572.9L463.1 605.7L460.9 605.7L460.9 588.3L458.0 588.3L458.0 595.7L456.0 595.7L456.0 581.9L451.1 581.9L451.1 583.9L448.9 583.9L448.9 576.2L447.0 576.2L447.0 587.8L444.8 587.8L444.8 576.2L442.8 576.2L442.8 573.5L437.9 573.5L437.9 558.7L433.5 558.7L433.5 550.4L431.8 550.4L431.8 566.4L429.6 566.4L429.6 551.0L427.4 551.0L427.4 553.2L423.1 553.2L423.1 543.3L422.0 543.3L422.0 549.3L419.8 549.3L419.8 559.8L418.1 559.8L418.1 558.1L415.9 558.1L415.9 562.0L413.0 562.0L413.0 571.8L411.0 571.8L411.0 566.4L408.8 566.4L408.8 577.9L406.8 577.9L406.8 572.4L405.5 572.4L405.5 575.7L403.8 575.7L403.8 569.1L401.1 569.1L401.1 574.6L400.0 574.6Z" fill="#1f77b4"/><rect x="196.500" y="354.500" width="496" height="368" fill="none" stroke="#000" stroke-width="1.100"/><text x="217.3" y="742.500" font-size="13.890" text-anchor="middle">0</text><text x="286.5" y="742.500" font-size="13.890" text-anchor="middle">5</text><text x="355.7" y="742.500" font-size="13.890" text-anchor="middle">10</text><text x="424.9" y="742.500" font-size="13.890" text-anchor="middle">15</text><text x="494.1" y="742.500" font-size="13.890" text-anchor="middle">20</text><text x="563.3" y="742.500" font-size="13.890" text-anchor="middle">25</text><text x="632.5" y="742.500" font-size="13.890" text-anchor="middle">30</text><text x="186.500" y="405.7" font-size="13.890" text-anchor="end">2</text><text x="186.500" y="474.7" font-size="13.890" text-anchor="end">1</text><text x="186.500" y="543.7" font-size="13.890" text-anchor="end">0</text><text x="186.500" y="612.7" font-size="13.890" text-anchor="end">−1</text><text x="186.500" y="681.7" font-size="13.890" text-anchor="end">−2</text><path d="M217.3 723v5M286.5 723v5M355.7 723v5M424.9 723v5M494.1 723v5M563.3 723v5M632.5 723v5M196 400.5h-5M196 469.5h-5M196 538.5h-5M196 607.5h-5M196 676.5h-5" stroke="#000" stroke-width="1.100" fill="none"/><text x="444" y="345.500" font-size="16.670" text-anchor="middle">HIFI 62798 long</text><text x="444.500" y="765" font-size="13.890" text-anchor="middle">Time (<tspan font-style="italic">μs</tspan>)</text><text transform="translate(155.500 540) rotate(-90)" font-size="13.890" text-anchor="middle">Asymmetry</text><rect x="362.500" y="361.500" width="323" height="25" rx="2.500" fill="#fff" fill-opacity=".8" stroke="#ccc" stroke-width="1.100"/><path d="M367.300 373.500h29.300M381.600 366.500v14" stroke="#1f77b4" stroke-width="2.080" fill="none"/><text x="406.500" y="378.400" font-size="13.890">HIFI62798; Pair Asym; long; MA: spec 1</text></svg>
<div class="a" style="left:116px;top:775px;width:640px;height:20px;background:#f0f0f0"></div>
<div class="a" style="left:120px;top:778px;width:1px;height:15px;background:#d0d0d0"></div>
<svg class="a" style="left:744px;top:783px" width="10" height="10" viewBox="0 0 10 10"><g fill="#b0b0b0"><rect x="7" y="1" width="2" height="2"/><rect x="4" y="4" width="2" height="2"/><rect x="7" y="4" width="2" height="2"/><rect x="1" y="7" width="2" height="2"/><rect x="4" y="7" width="2" height="2"/><rect x="7" y="7" width="2" height="2"/></g></svg>
<!--/PLOTWIN-->

<!-- main window border -->
<div class="a" style="left:0;top:0;width:1461px;height:911px;border:1px solid #1c2a45;pointer-events:none"></div>
</body>
</html>
